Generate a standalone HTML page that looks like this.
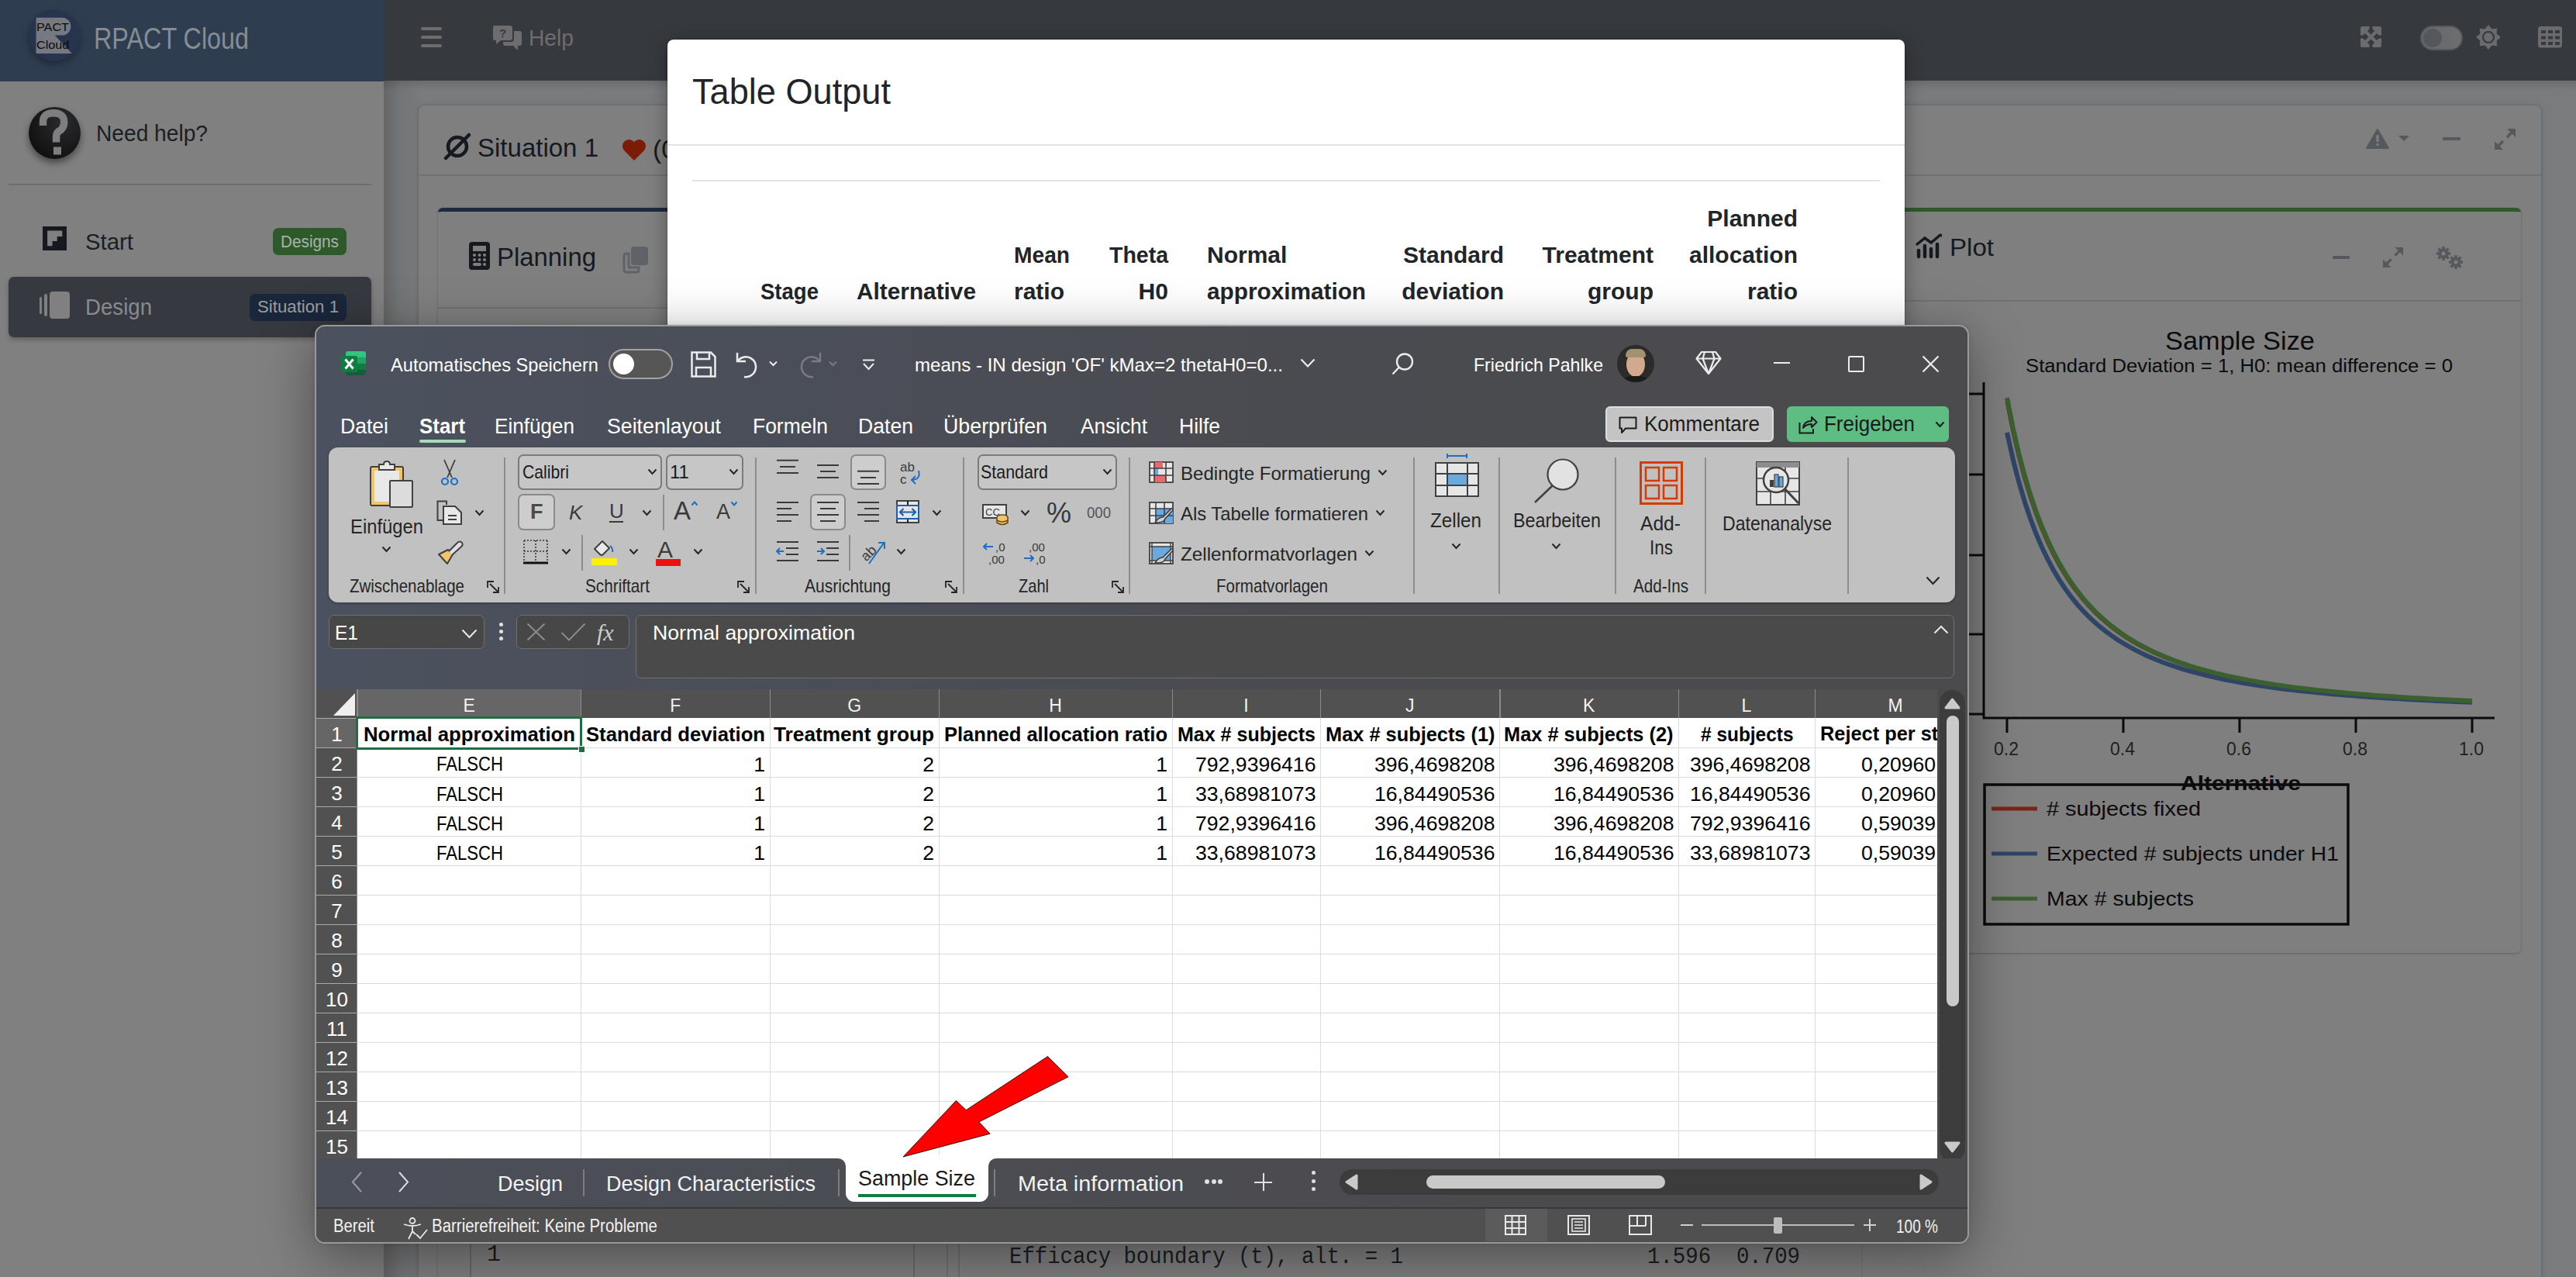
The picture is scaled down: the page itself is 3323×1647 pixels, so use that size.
<!DOCTYPE html>
<html><head><meta charset="utf-8">
<style>
*{box-sizing:border-box}
html,body{margin:0;padding:0}
body{width:3323px;height:1647px;overflow:hidden;position:relative;background:#7d7d7d;font-family:"Liberation Sans",sans-serif;color:#1a1d21}
.a{position:absolute}
.t{position:absolute;white-space:nowrap;line-height:1;top:calc(var(--b) * 1px - 0.8465em);transform-origin:0 0}
.b{font-weight:bold}
svg{position:absolute;overflow:visible}
</style></head>
<body>
<!-- ============ BACKGROUND APP (dimmed) ============ -->
<div class="a" style="left:0;top:0;width:495px;height:105px;background:#2f3d51"></div>
<div class="a" style="left:495px;top:0;width:2828px;height:104px;background:#36393e"></div>
<div class="a" style="left:0;top:105px;width:495px;height:1542px;background:#808080"></div>
<div class="a" style="left:495px;top:104px;width:2828px;height:1543px;background:#7a7b7c"></div>
<div class="a" style="left:495px;top:104px;width:50px;height:1543px;background:linear-gradient(90deg,#656566 0,#737475 40%,#7a7b7c 100%)"></div>
<div class="a" style="left:495px;top:104px;width:2828px;height:12px;background:linear-gradient(180deg,rgba(0,0,0,.12),rgba(0,0,0,0))"></div>

<!-- logo -->
<div class="a" style="left:37px;top:13px;width:66px;height:66px;border-radius:50%;background:#26344d;box-shadow:0 4px 10px rgba(0,0,0,.35)"></div>
<svg style="left:0;top:0" width="120" height="100"><path d="M46.6 22.7 H80 A11.4 11.4 0 0 1 80 45.5 H70.6 L92.8 69 H46.6 Z" fill="#76797f"></path></svg>
<span class="t" style="left: 46.6px; --b: 40; font-size: 15px; color: rgb(11, 11, 11); --w: 42; transform: scaleX(1.0795); top: 27.3px;">PACT</span>
<span class="t" style="left: 46.6px; --b: 63; font-size: 15px; color: rgb(11, 11, 11); --w: 42.4; transform: scaleX(1.0815); top: 50.3px;">Cloud</span>
<span class="t" style="left: 121px; --b: 63; font-size: 38px; color: rgb(134, 140, 147); --w: 200; transform: scaleX(0.8506); top: 30.8px;">RPACT Cloud</span>

<!-- top nav -->
<div class="a" style="left:543px;top:35px;width:27px;height:4px;background:#6d6d70;border-radius:2px"></div>
<div class="a" style="left:543px;top:46px;width:27px;height:4px;background:#6d6d70;border-radius:2px"></div>
<div class="a" style="left:543px;top:57px;width:27px;height:4px;background:#6d6d70;border-radius:2px"></div>
<svg style="left:634px;top:32px" width="40" height="34" viewBox="0 0 40 34"><path d="M2 3 Q2 1 4 1 H24 Q27 1 27 4 V17 Q27 20 24 20 H12 L6 25 V20 H4 Q2 20 2 17 Z" fill="#6d6d70"></path><path d="M29 8 H36 Q39 8 39 11 V24 Q39 27 36 27 H34 V33 L28 27 H18 Q15 27 15 24 V22 H25 Q29 22 29 18 Z" fill="#6d6d70"></path><text x="10" y="16" font-size="15" font-weight="bold" fill="#36393e" font-family="Liberation Sans">?</text></svg>
<span class="t" style="left: 682px; --b: 59; font-size: 29px; color: rgb(109, 109, 112); --w: 58; transform: scaleX(0.9722); top: 34.5px;">Help</span>

<svg style="left:3045px;top:34px" width="27" height="27" viewBox="0 0 27 27"><rect width="27" height="27" rx="2.5" fill="#6a6b6e"></rect><g fill="#36393e"><path d="M8.9 5.9 L13.5 1.3000000000000007 L18.1 5.9 L13.5 10.5 ZM8.9 21.1 L13.5 16.5 L18.1 21.1 L13.5 25.700000000000003 ZM1.3000000000000007 13.5 L5.9 8.9 L10.5 13.5 L5.9 18.1 ZM16.5 13.5 L21.1 8.9 L25.700000000000003 13.5 L21.1 18.1 Z"></path><rect x="11.5" y="-1" width="4" height="4"></rect><rect x="11.5" y="24" width="4" height="4"></rect><rect x="-1" y="11.5" width="4" height="4"></rect><rect x="24" y="11.5" width="4" height="4"></rect></g></svg>
<div class="a" style="left:3122px;top:33px;width:55px;height:32px;border-radius:16px;background:linear-gradient(90deg,#66676a,#6e6e70);border:2px solid #55585c"></div>
<div class="a" style="left:3126px;top:37px;width:24px;height:24px;border-radius:50%;background:#54575b"></div>
<svg style="left:3194px;top:32px" width="32" height="32" viewBox="0 0 32 32"><path d="M16.00 0.00 L20.40 5.38 L27.31 4.69 L26.62 11.60 L32.00 16.00 L26.62 20.40 L27.31 27.31 L20.40 26.62 L16.00 32.00 L11.60 26.62 L4.69 27.31 L5.38 20.40 L0.00 16.00 L5.38 11.60 L4.69 4.69 L11.60 5.38 Z" fill="#6a6b6e"></path><circle cx="16" cy="16" r="7" fill="none" stroke="#36393e" stroke-width="2.2"></circle></svg>
<svg style="left:3274px;top:34px" width="32" height="28" viewBox="0 0 32 28"><rect width="31" height="27.5" rx="3.5" fill="#6a6b6e"></rect><rect x="4" y="5.0" width="6" height="4" fill="#36393e"></rect><rect x="4" y="12.5" width="6" height="4" fill="#36393e"></rect><rect x="4" y="20.0" width="6" height="4" fill="#36393e"></rect><rect x="13" y="5.0" width="6" height="4" fill="#36393e"></rect><rect x="13" y="12.5" width="6" height="4" fill="#36393e"></rect><rect x="13" y="20.0" width="6" height="4" fill="#36393e"></rect><rect x="22" y="5.0" width="6" height="4" fill="#36393e"></rect><rect x="22" y="12.5" width="6" height="4" fill="#36393e"></rect><rect x="22" y="20.0" width="6" height="4" fill="#36393e"></rect></svg>

<!-- sidebar -->
<div class="a" style="left:37px;top:138px;width:67px;height:67px;border-radius:50%;background:radial-gradient(circle at 65% 30%,#2a2b2d,#111 75%);box-shadow:0 5px 10px rgba(0,0,0,.45)"></div>
<svg style="left:36px;top:137px" width="68" height="68" viewBox="0 0 68 68"><path d="M19.5 25 V20 Q19.5 8.7 33 8.7 Q46.7 8.7 46.7 21 Q46.7 29 39 33 Q36.6 35 36.6 40 V46.4" fill="none" stroke="#7e7e7e" stroke-width="9.5"></path><rect x="33" y="52.5" width="10" height="10" fill="#7e7e7e"></rect></svg>
<span class="t" style="left: 124px; --b: 182; font-size: 30px; color: rgb(27, 30, 34); --w: 144; transform: scaleX(0.9383); top: 156.6px;">Need help?</span>
<div class="a" style="left:11px;top:237px;width:468px;height:2px;background:#6d6d6d"></div>

<div class="a" style="left:55px;top:292px;width:31px;height:31px;background:#16191d"></div>
<svg style="left:0;top:0" width="100" height="340"><path d="M61.1 297.6 H80.3 V305 H73.7 V311.1 H67.6 V317.2 H61.1 Z" fill="#808080"></path></svg>
<span class="t" style="left: 110px; --b: 322; font-size: 30px; color: rgb(27, 30, 34); --w: 62; transform: scaleX(0.9785); top: 296.6px;">Start</span>
<div class="a" style="left:352px;top:294px;width:95px;height:35px;border-radius:7px;background:#2e5a2b"></div>
<span class="t" style="left: 362px; --b: 320; font-size: 22px; color: rgb(169, 178, 168); --w: 75; transform: scaleX(0.9436); top: 301.4px;">Designs</span>

<div class="a" style="left:11px;top:357px;width:468px;height:78px;border-radius:7px;background:#36393f;box-shadow:0 3px 6px rgba(0,0,0,.25)"></div>
<div class="a" style="left:50.6px;top:383px;width:3px;height:22px;background:#808080;border-radius:1.5px"></div>
<div class="a" style="left:57px;top:379px;width:4px;height:29px;background:#808080;border-radius:2px"></div>
<div class="a" style="left:64px;top:376px;width:26px;height:35px;background:#808080;border-radius:4px"></div>
<span class="t" style="left: 110px; --b: 406; font-size: 30px; color: rgb(135, 138, 142); --w: 86; transform: scaleX(0.9209); top: 380.6px;">Design</span>
<div class="a" style="left:322px;top:379px;width:125px;height:35px;border-radius:7px;background:#1a263a"></div>
<span class="t" style="left: 332px; --b: 404; font-size: 22px; color: rgb(154, 158, 164); --w: 105; transform: scaleX(1.0099); top: 385.4px;">Situation 1</span>

<!-- situation card -->
<div class="a" style="left:540px;top:136px;width:2738px;height:1520px;border-radius:7px;background:#7f7f7f;box-shadow:0 0 2px rgba(0,0,0,.2),0 1px 9px rgba(0,0,0,.16)"></div>
<div class="a" style="left:540px;top:225px;width:2738px;height:2px;background:#717171"></div>
<svg style="left:572px;top:171px" width="36" height="36" viewBox="0 0 36 36"><circle cx="18" cy="18" r="12" fill="none" stroke="#16191d" stroke-width="4.5"></circle><path d="M33 3 L3 33" stroke="#16191d" stroke-width="4.5" stroke-linecap="round"></path></svg>
<span class="t" style="left: 616px; --b: 202; font-size: 34px; color: rgb(22, 25, 29); --w: 156; transform: scaleX(0.9709); top: 173.2px;">Situation 1</span>
<svg style="left:802px;top:180px" width="32" height="27" viewBox="0 0 32 27"><path d="M16 27 L3 14 A8 8 0 0 1 16 3 A8 8 0 0 1 29 14 Z" fill="#7a1c06"></path></svg>
<span class="t" style="left: 842px; --b: 204; font-size: 34px; color: rgb(22, 25, 29); top: 175.2px;">(0</span>

<!-- warning, minus, expand icons on situation card -->
<svg style="left:3052px;top:166px" width="30" height="26" viewBox="0 0 30 26"><path d="M15 1 L29 25 H1 Z" fill="#55595e" stroke="#55595e" stroke-width="2" stroke-linejoin="round"></path><rect x="13.5" y="8" width="3" height="9" fill="#7f7f7f"></rect><rect x="13.5" y="19" width="3" height="3" fill="#7f7f7f"></rect></svg>
<svg style="left:3093px;top:174px" width="16" height="10" viewBox="0 0 16 10"><path d="M1 1 H15 L8 8 Z" fill="#55595e"></path></svg>
<div class="a" style="left:3151px;top:177px;width:23px;height:4px;background:#55595e;border-radius:1px"></div>
<svg style="left:3217px;top:165px" width="29" height="29" viewBox="0 0 29 29"><path d="M17 12 L26 3 M12 17 L3 26" stroke="#55595e" stroke-width="3.5"></path><path d="M17 1 H28 V12 Z M1 17 V28 H12 Z" fill="#55595e"></path></svg>

<!-- planning card -->
<div class="a" style="left:565px;top:268px;width:1836px;height:1400px;border-radius:6px;background:#7f7f7f;border-top:5px solid #1c2a40;box-shadow:0 1px 3px rgba(0,0,0,.25)"></div>
<div class="a" style="left:565px;top:396px;width:1836px;height:2px;background:#717171"></div>
<svg style="left:605px;top:312px" width="27" height="36" viewBox="0 0 27 36"><rect x="0" y="0" width="27" height="36" rx="4" fill="#16191d"></rect><rect x="5" y="5" width="17" height="7" fill="#7f7f7f"></rect><g fill="#7f7f7f"><circle cx="7" cy="17" r="2"></circle><circle cx="13.5" cy="17" r="2"></circle><circle cx="20" cy="17" r="2"></circle><circle cx="7" cy="23" r="2"></circle><circle cx="13.5" cy="23" r="2"></circle><circle cx="20" cy="23" r="2"></circle><rect x="5" y="27" width="11" height="4" rx="2"></rect><circle cx="20" cy="29" r="2"></circle></g></svg>
<span class="t" style="left: 641px; --b: 343; font-size: 34px; color: rgb(22, 25, 29); --w: 128; transform: scaleX(0.9672); top: 314.2px;">Planning</span>
<svg style="left:802px;top:318px" width="34" height="34" viewBox="0 0 34 34"><path d="M3 12 Q3 9 6 9 H9 V26 Q9 27 10 27 H22 V30 Q22 33 19 33 H6 Q3 33 3 30 Z" fill="none" stroke="#5f6368" stroke-width="3"></path><rect x="12" y="0" width="22" height="24" rx="4" fill="#5f6368"></rect></svg>

<!-- plot card -->
<div class="a" style="left:2300px;top:268px;width:952px;height:961px;border-radius:6px;background:#7f7f7f;border-top:5px solid #2d5a28;box-shadow:0 1px 3px rgba(0,0,0,.25)"></div>
<div class="a" style="left:2300px;top:387px;width:952px;height:2px;background:#717171"></div>
<svg style="left:2471px;top:301px" width="35" height="32" viewBox="0 0 35 32"><path d="M2 14 L12 6 L20 12 L32 2" fill="none" stroke="#16191d" stroke-width="3.5" stroke-linecap="round"></path><path d="M30 1 H34 V5 Z" fill="#16191d"></path><g stroke="#16191d" stroke-width="4.5" stroke-linecap="round"><path d="M4 22 V30 M12 16 V30 M20 20 V30 M28 14 V30"></path></g></svg>
<span class="t" style="left: 2515px; --b: 330; font-size: 32px; color: rgb(22, 25, 29); --w: 57; transform: scaleX(1.0337); top: 302.9px;">Plot</span>
<div class="a" style="left:3009px;top:330px;width:22px;height:4px;background:#55595e;border-radius:1px"></div>
<svg style="left:3073px;top:318px" width="28" height="28" viewBox="0 0 29 29"><path d="M17 12 L26 3 M12 17 L3 26" stroke="#55595e" stroke-width="3.5"></path><path d="M17 1 H28 V12 Z M1 17 V28 H12 Z" fill="#55595e"></path></svg>
<svg style="left:3143px;top:318px" width="36" height="30" viewBox="0 0 36 30"><g fill="#55595e"><circle cx="9" cy="9" r="6.5"></circle><circle cx="25" cy="20" r="6.5"></circle><g stroke="#55595e" stroke-width="3.5"><path d="M9 0 V18 M0 9 H18 M2.6 2.6 L15.4 15.4 M15.4 2.6 L2.6 15.4"></path><path d="M25 11 V29 M16 20 H34 M18.6 13.6 L31.4 26.4 M31.4 13.6 L18.6 26.4"></path></g></g><circle cx="9" cy="9" r="2.5" fill="#7f7f7f"></circle><circle cx="25" cy="20" r="2.5" fill="#7f7f7f"></circle></svg>

<!-- plot -->
<span class="t" style="--c: 2889px; left: 2792.5px; --b: 451; font-size: 33px; color: rgb(11, 11, 11); --w: 193; transform: scaleX(1.0417); top: 423.1px;">Sample Size</span>
<span class="t" style="left: 2613px; --b: 480; font-size: 23px; color: rgb(11, 11, 11); --w: 551; transform: scaleX(1.1174); top: 460.5px;">Standard Deviation = 1, H0: mean difference = 0</span>
<svg style="left:0;top:0" width="3323" height="1647">
 <g stroke="#0b0b0b" stroke-width="3" fill="none">
  <path d="M2559 493 V926 H3218"></path>
  <path d="M2540 508 H2559 M2540 612 H2559 M2540 716 H2559 M2540 818 H2559 M2540 921 H2559"></path>
  <path d="M2589 926 V945 M2739 926 V945 M2889 926 V945 M3039 926 V945 M3189 926 V945"></path>
 </g>
 <rect x="2560" y="1012" width="469" height="180" fill="none" stroke="#0b0b0b" stroke-width="3.5"></rect>
 <path d="M2569 1043 H2628" stroke="#7c2418" stroke-width="5"></path>
 <path d="M2569 1101 H2628" stroke="#2d4567" stroke-width="5"></path>
 <path d="M2569 1159 H2628" stroke="#3a6030" stroke-width="5"></path>
 <path id="cb" d="M2589.0 557.8 L2596.5 591.5 L2604.0 620.7 L2611.5 646.2 L2619.0 668.6 L2626.5 688.3 L2634.0 705.8 L2641.5 721.4 L2649.0 735.4 L2656.5 747.9 L2664.0 759.2 L2671.5 769.4 L2679.0 778.7 L2686.5 787.2 L2694.0 794.9 L2701.5 801.9 L2709.0 808.4 L2716.5 814.4 L2724.0 819.9 L2731.5 825.0 L2739.0 829.7 L2746.5 834.0 L2754.0 838.1 L2761.5 841.9 L2769.0 845.4 L2776.5 848.7 L2784.0 851.8 L2791.5 854.7 L2799.0 857.4 L2806.5 859.9 L2814.0 862.3 L2821.5 864.6 L2829.0 866.7 L2836.5 868.7 L2844.0 870.6 L2851.5 872.4 L2859.0 874.1 L2866.5 875.7 L2874.0 877.2 L2881.5 878.6 L2889.0 880.0 L2896.5 881.3 L2904.0 882.6 L2911.5 883.8 L2919.0 884.9 L2926.5 886.0 L2934.0 887.0 L2941.5 888.0 L2949.0 888.9 L2956.5 889.8 L2964.0 890.7 L2971.5 891.5 L2979.0 892.3 L2986.5 893.1 L2994.0 893.8 L3001.5 894.5 L3009.0 895.2 L3016.5 895.8 L3024.0 896.5 L3031.5 897.1 L3039.0 897.6 L3046.5 898.2 L3054.0 898.7 L3061.5 899.3 L3069.0 899.8 L3076.5 900.2 L3084.0 900.7 L3091.5 901.1 L3099.0 901.6 L3106.5 902.0 L3114.0 902.4 L3121.5 902.8 L3129.0 903.2 L3136.5 903.5 L3144.0 903.9 L3151.5 904.2 L3159.0 904.6 L3166.5 904.9 L3174.0 905.2 L3181.5 905.5 L3189.0 905.8" fill="none" stroke="#2d4567" stroke-width="6"></path>
 <path id="cr" d="M2589.0 517.8 L2596.5 555.2 L2604.0 587.7 L2611.5 616.0 L2619.0 640.8 L2626.5 662.7 L2634.0 682.1 L2641.5 699.4 L2649.0 714.9 L2656.5 728.9 L2664.0 741.4 L2671.5 752.8 L2679.0 763.1 L2686.5 772.5 L2694.0 781.0 L2701.5 788.9 L2709.0 796.1 L2716.5 802.7 L2724.0 808.8 L2731.5 814.4 L2739.0 819.7 L2746.5 824.5 L2754.0 829.0 L2761.5 833.2 L2769.0 837.1 L2776.5 840.8 L2784.0 844.2 L2791.5 847.4 L2799.0 850.4 L2806.5 853.2 L2814.0 855.9 L2821.5 858.4 L2829.0 860.8 L2836.5 863.0 L2844.0 865.1 L2851.5 867.1 L2859.0 869.0 L2866.5 870.7 L2874.0 872.4 L2881.5 874.0 L2889.0 875.6 L2896.5 877.0 L2904.0 878.4 L2911.5 879.7 L2919.0 881.0 L2926.5 882.2 L2934.0 883.3 L2941.5 884.4 L2949.0 885.5 L2956.5 886.5 L2964.0 887.4 L2971.5 888.4 L2979.0 889.2 L2986.5 890.1 L2994.0 890.9 L3001.5 891.7 L3009.0 892.4 L3016.5 893.1 L3024.0 893.8 L3031.5 894.5 L3039.0 895.1 L3046.5 895.8 L3054.0 896.4 L3061.5 896.9 L3069.0 897.5 L3076.5 898.0 L3084.0 898.5 L3091.5 899.0 L3099.0 899.5 L3106.5 900.0 L3114.0 900.4 L3121.5 900.9 L3129.0 901.3 L3136.5 901.7 L3144.0 902.1 L3151.5 902.5 L3159.0 902.8 L3166.5 903.2 L3174.0 903.5 L3181.5 903.9 L3189.0 904.2" fill="none" stroke="#7c2418" stroke-width="5"></path>
 <path id="cg" d="M2589.0 513.1 L2596.5 550.9 L2604.0 583.7 L2611.5 612.4 L2619.0 637.5 L2626.5 659.7 L2634.0 679.3 L2641.5 696.8 L2649.0 712.5 L2656.5 726.6 L2664.0 739.3 L2671.5 750.8 L2679.0 761.2 L2686.5 770.7 L2694.0 779.4 L2701.5 787.3 L2709.0 794.6 L2716.5 801.3 L2724.0 807.5 L2731.5 813.2 L2739.0 818.5 L2746.5 823.4 L2754.0 828.0 L2761.5 832.2 L2769.0 836.2 L2776.5 839.9 L2784.0 843.3 L2791.5 846.6 L2799.0 849.6 L2806.5 852.5 L2814.0 855.1 L2821.5 857.7 L2829.0 860.1 L2836.5 862.3 L2844.0 864.4 L2851.5 866.4 L2859.0 868.4 L2866.5 870.2 L2874.0 871.9 L2881.5 873.5 L2889.0 875.0 L2896.5 876.5 L2904.0 877.9 L2911.5 879.3 L2919.0 880.5 L2926.5 881.7 L2934.0 882.9 L2941.5 884.0 L2949.0 885.1 L2956.5 886.1 L2964.0 887.1 L2971.5 888.0 L2979.0 888.9 L2986.5 889.7 L2994.0 890.6 L3001.5 891.3 L3009.0 892.1 L3016.5 892.8 L3024.0 893.5 L3031.5 894.2 L3039.0 894.8 L3046.5 895.5 L3054.0 896.1 L3061.5 896.7 L3069.0 897.2 L3076.5 897.8 L3084.0 898.3 L3091.5 898.8 L3099.0 899.3 L3106.5 899.7 L3114.0 900.2 L3121.5 900.6 L3129.0 901.1 L3136.5 901.5 L3144.0 901.9 L3151.5 902.3 L3159.0 902.6 L3166.5 903.0 L3174.0 903.3 L3181.5 903.7 L3189.0 904.0" fill="none" stroke="#3a6030" stroke-width="6"></path>
</svg>
<span class="t" style="left: 2572px; --b: 974; font-size: 23px; color: rgb(31, 31, 31); top: 954.5px;">0.2</span>
<span class="t" style="left: 2722px; --b: 974; font-size: 23px; color: rgb(31, 31, 31); top: 954.5px;">0.4</span>
<span class="t" style="left: 2872px; --b: 974; font-size: 23px; color: rgb(31, 31, 31); top: 954.5px;">0.6</span>
<span class="t" style="left: 3022px; --b: 974; font-size: 23px; color: rgb(31, 31, 31); top: 954.5px;">0.8</span>
<span class="t" style="left: 3172px; --b: 974; font-size: 23px; color: rgb(31, 31, 31); top: 954.5px;">1.0</span>
<span class="t b" style="left: 2813px; --b: 1019; font-size: 26px; color: rgb(11, 11, 11); --w: 155; transform: scaleX(1.1534); top: 997px;">Alternative</span>
<span class="t" style="left: 2640px; --b: 1052; font-size: 25px; color: rgb(11, 11, 11); --w: 199; transform: scaleX(1.1548); top: 1030.8px;">#&nbsp;subjects fixed</span>
<span class="t" style="left: 2640px; --b: 1110; font-size: 25px; color: rgb(11, 11, 11); --w: 377; transform: scaleX(1.1303); top: 1088.8px;">Expected # subjects under H1</span>
<span class="t" style="left: 2640px; --b: 1168; font-size: 25px; color: rgb(11, 11, 11); --w: 190; transform: scaleX(1.1394); top: 1146.8px;">Max # subjects</span>

<!-- bottom strip (below excel) -->
<div class="a" style="left:606px;top:1590px;width:574px;height:80px;border:2px solid #6a6a6a;border-radius:6px"></div>
<span class="t" style="left: 628px; --b: 1628; font-size: 30px; font-family: &quot;Liberation Mono&quot;, monospace; color: rgb(26, 29, 33); top: 1602.6px;">1</span>
<div class="a" style="left:1221px;top:1590px;width:2px;height:60px;background:#6f6f6f"></div>
<div class="a" style="left:1236px;top:1590px;width:2px;height:60px;background:#6f6f6f"></div>
<span class="t" style="left: 1302px; --b: 1631; font-size: 30px; font-family: &quot;Liberation Mono&quot;, monospace; color: rgb(26, 29, 33); --w: 508; transform: scaleX(0.9102); top: 1605.6px;">Efficacy boundary (t), alt. = 1</span>
<span class="t" style="left: 2125px; --b: 1631; font-size: 30px; font-family: &quot;Liberation Mono&quot;, monospace; color: rgb(26, 29, 33); --w: 197; transform: scaleX(0.9118); top: 1605.6px;">1.596&nbsp; 0.709</span>

<!-- ============ MODAL ============ -->
<div class="a" style="left:861px;top:51px;width:1596px;height:1400px;background:#fff;border-radius:8px;box-shadow:0 0 0 1px rgba(0,0,0,.18),0 5px 25px rgba(0,0,0,.35)"></div>
<span class="t" style="left: 893px; --b: 134; font-size: 46px; color: rgb(33, 37, 41); --w: 256; transform: scaleX(0.9814); top: 95.1px;">Table Output</span>
<div class="a" style="left:861px;top:186px;width:1596px;height:2px;background:#dfe2e6"></div>
<div class="a" style="left:893px;top:232px;width:1532px;height:2px;background:#dfe2e6"></div>
<span class="t b" style="left: 981px; --b: 386; font-size: 30px; color: rgb(33, 37, 41); --w: 75; transform: scaleX(0.918); top: 360.6px;">Stage</span>
<span class="t b" style="left: 1105px; --b: 386; font-size: 30px; color: rgb(33, 37, 41); --w: 154; transform: scaleX(0.9931); top: 360.6px;">Alternative</span>
<span class="t b" style="left: 1308px; --b: 339; font-size: 30px; color: rgb(33, 37, 41); --w: 72; transform: scaleX(0.9389); top: 313.6px;">Mean</span>
<span class="t b" style="left: 1308px; --b: 386; font-size: 30px; color: rgb(33, 37, 41); top: 360.6px;">ratio</span>
<span class="t b" style="left: 1431px; --b: 339; font-size: 30px; color: rgb(33, 37, 41); --w: 76; transform: scaleX(0.9498); top: 313.6px;">Theta</span>
<span class="t b" style="--r: 1507; left: 1468.6px; --b: 386; font-size: 30px; color: rgb(33, 37, 41); top: 360.6px;">H0</span>
<span class="t b" style="left: 1557px; --b: 339; font-size: 30px; color: rgb(33, 37, 41); top: 313.6px;">Normal</span>
<span class="t b" style="left: 1557px; --b: 386; font-size: 30px; color: rgb(33, 37, 41); --w: 205; transform: scaleX(0.9918); top: 360.6px;">approximation</span>
<span class="t b" style="--r: 1940; left: 1810px; --b: 339; font-size: 30px; color: rgb(33, 37, 41); top: 313.6px;">Standard</span>
<span class="t b" style="--r: 1940; left: 1808.3px; --b: 386; font-size: 30px; color: rgb(33, 37, 41); top: 360.6px;">deviation</span>
<span class="t b" style="--r: 2133; left: 1989.6px; --b: 339; font-size: 30px; color: rgb(33, 37, 41); top: 313.6px;">Treatment</span>
<span class="t b" style="--r: 2133; left: 2048px; --b: 386; font-size: 30px; color: rgb(33, 37, 41); top: 360.6px;">group</span>
<span class="t b" style="--r: 2319; left: 2202.3px; --b: 292; font-size: 30px; color: rgb(33, 37, 41); top: 266.6px;">Planned</span>
<span class="t b" style="--r: 2319; left: 2179px; --b: 339; font-size: 30px; color: rgb(33, 37, 41); top: 313.6px;">allocation</span>
<span class="t b" style="--r: 2319; left: 2254px; --b: 386; font-size: 30px; color: rgb(33, 37, 41); top: 360.6px;">ratio</span>

<!-- EXCEL -->
<!--EXCEL_START-->
<div class="a" style="left:406px;top:419px;width:2134px;height:1185px;border-radius:13px;border:2px solid #999;background:linear-gradient(90deg,#4b515e 0,#4a4e58 30%,#4a4b50 60%,#4b4b4d 100%);box-shadow:0 16px 70px rgba(0,0,0,.40),0 0 6px rgba(0,0,0,.10)"></div>
<!-- title bar -->
<svg style="left:440px;top:453px" width="33" height="32" viewBox="0 0 33 32"><rect x="6" y="0" width="26" height="31" rx="3" fill="#21a366"></rect><path d="M9 0 H29 Q32 0 32 3 V8 H6 V3 Q6 0 9 0Z" fill="#33c481"></path><rect x="6" y="16" width="26" height="8" fill="#107c41"></rect><path d="M6 24 H32 V28 Q32 31 29 31 H9 Q6 31 6 28Z" fill="#185c37"></path><rect x="0" y="6" width="21" height="21" rx="2" fill="#107c41"></rect><path d="M5.5 10.5 L15.5 22.5 M15.5 10.5 L5.5 22.5" stroke="#fff" stroke-width="3"></path></svg>
<span class="t" style="left: 504px; --b: 479; font-size: 24px; color: rgb(255, 255, 255); --w: 268; transform: scaleX(0.9847); top: 458.7px;">Automatisches Speichern</span>
<div class="a" style="left:785px;top:450px;width:83px;height:39px;border-radius:20px;border:2px solid #a2a2a2;background:#565656"></div>
<div class="a" style="left:791px;top:456px;width:27px;height:27px;border-radius:50%;background:#fff"></div>
<svg style="left:891px;top:453px" width="33" height="34" viewBox="0 0 33 34"><path d="M1.5 1.5 H26 L31.5 7 V32.5 H1.5 Z" fill="none" stroke="#ececec" stroke-width="2.5"></path><path d="M8 1.5 V10 H24 V1.5" fill="none" stroke="#ececec" stroke-width="2.5"></path><path d="M7 32.5 V21 H26 V32.5" fill="none" stroke="#ececec" stroke-width="2.5"></path></svg>
<svg style="left:948px;top:452px" width="34" height="36" viewBox="0 0 34 36"><path d="M3 3 V14 H14" fill="none" stroke="#ececec" stroke-width="2.5"></path><path d="M4 13 A13 13 0 1 1 12 34" fill="none" stroke="#ececec" stroke-width="2.5"></path></svg>
<svg style="left:992px;top:465px" width="11" height="8" viewBox="0 0 11 8"><path d="M1 1.5 L5.5 6 L10 1.5" fill="none" stroke="#ececec" stroke-width="2"></path></svg>
<svg style="left:1027px;top:452px" width="34" height="36" viewBox="0 0 34 36"><path d="M31 3 V14 H20" fill="none" stroke="#7b7b7e" stroke-width="2.5"></path><path d="M30 13 A13 13 0 1 0 22 34" fill="none" stroke="#7b7b7e" stroke-width="2.5"></path></svg>
<svg style="left:1069px;top:465px" width="11" height="8" viewBox="0 0 11 8"><path d="M1 1.5 L5.5 6 L10 1.5" fill="none" stroke="#7b7b7e" stroke-width="2"></path></svg>
<svg style="left:1112px;top:463px" width="17" height="16" viewBox="0 0 17 16"><path d="M1 1.5 H16" stroke="#ececec" stroke-width="2"></path><path d="M2 6 L8.5 13 L15 6" fill="none" stroke="#ececec" stroke-width="2"></path></svg>
<span class="t" style="left: 1180px; --b: 479; font-size: 24px; color: rgb(255, 255, 255); --w: 475; transform: scaleX(1.0034); top: 458.7px;">means - IN design 'OF' kMax=2 thetaH0=0...</span>
<svg style="left:1677px;top:462px" width="20" height="13" viewBox="0 0 20 13"><path d="M1.5 1.5 L10 10.5 L18.5 1.5" fill="none" stroke="#ececec" stroke-width="2.2"></path></svg>
<svg style="left:1795px;top:455px" width="29" height="29" viewBox="0 0 29 29"><circle cx="17" cy="11.5" r="10" fill="none" stroke="#ececec" stroke-width="2.3"></circle><path d="M10 18.5 L1.5 27.5" stroke="#ececec" stroke-width="2.3"></path></svg>
<span class="t" style="left: 1901px; --b: 479; font-size: 24px; color: rgb(255, 255, 255); --w: 167; transform: scaleX(0.9631); top: 458.7px;">Friedrich Pahlke</span>
<div class="a" style="left:2086px;top:445px;width:48px;height:48px;border-radius:50%;background:#2b2b2b;overflow:hidden"><div class="a" style="left:12px;top:9px;width:24px;height:32px;border-radius:50%;background:#d2a98e"></div><div class="a" style="left:11px;top:5px;width:26px;height:11px;border-radius:12px 12px 4px 4px;background:#a4916e"></div><div class="a" style="left:6px;top:40px;width:36px;height:14px;border-radius:50%;background:#1a1a1a"></div></div>
<svg style="left:2187px;top:452px" width="34" height="32" viewBox="0 0 34 32"><path d="M8 2 H26 L32.5 10.5 L17 30 L1.5 10.5 Z M1.5 10.5 H32.5 M12 2 L9.5 10.5 L17 30 L24.5 10.5 L22 2" fill="none" stroke="#ececec" stroke-width="2.2" stroke-linejoin="round"></path></svg>
<div class="a" style="left:2288px;top:467px;width:21px;height:2px;background:#ececec"></div>
<div class="a" style="left:2384px;top:459px;width:21px;height:21px;border:2px solid #ececec;border-radius:2px"></div>
<svg style="left:2479px;top:458px" width="23" height="23" viewBox="0 0 23 23"><path d="M1.5 1.5 L21.5 21.5 M21.5 1.5 L1.5 21.5" stroke="#ececec" stroke-width="2.2"></path></svg>
<!-- menu -->
<span class="t" style="left: 439px; --b: 560; font-size: 27px; color: rgb(255, 255, 255); --w: 62; transform: scaleX(0.9836); top: 537.1px;">Datei</span>
<span class="t b" style="left: 541px; --b: 560; font-size: 27px; color: rgb(255, 255, 255); --w: 59; transform: scaleX(0.9591); top: 537.1px;">Start</span>
<div class="a" style="left:541px;top:567px;width:60px;height:4px;border-radius:2px;background:#a5dbb5"></div>
<span class="t" style="left: 638px; --b: 560; font-size: 27px; color: rgb(255, 255, 255); --w: 103; transform: scaleX(0.9663); top: 537.1px;">Einfügen</span>
<span class="t" style="left: 783px; --b: 560; font-size: 27px; color: rgb(255, 255, 255); --w: 147; transform: scaleX(0.9892); top: 537.1px;">Seitenlayout</span>
<span class="t" style="left: 971px; --b: 560; font-size: 27px; color: rgb(255, 255, 255); --w: 97; transform: scaleX(0.9795); top: 537.1px;">Formeln</span>
<span class="t" style="left: 1107px; --b: 560; font-size: 27px; color: rgb(255, 255, 255); --w: 71; transform: scaleX(0.9853); top: 537.1px;">Daten</span>
<span class="t" style="left: 1217px; --b: 560; font-size: 27px; color: rgb(255, 255, 255); --w: 134; transform: scaleX(0.9919); top: 537.1px;">Überprüfen</span>
<span class="t" style="left: 1394px; --b: 560; font-size: 27px; color: rgb(255, 255, 255); --w: 86; transform: scaleX(0.9712); top: 537.1px;">Ansicht</span>
<span class="t" style="left: 1521px; --b: 560; font-size: 27px; color: rgb(255, 255, 255); --w: 53; transform: scaleX(0.9812); top: 537.1px;">Hilfe</span>
<div class="a" style="left:2071px;top:524px;width:217px;height:46px;border-radius:6px;background:#c4c4c4;border:2px solid #dedede"></div>
<svg style="left:2088px;top:537px" width="24" height="23" viewBox="0 0 24 23"><path d="M1.5 1.5 H22.5 V15.5 H9 L4 21 V15.5 H1.5 Z" fill="none" stroke="#1d1d1d" stroke-width="2" stroke-linejoin="round"></path></svg>
<span class="t" style="left: 2121px; --b: 557; font-size: 27px; color: rgb(27, 27, 27); --w: 149; transform: scaleX(0.9639); top: 534.1px;">Kommentare</span>
<div class="a" style="left:2305px;top:524px;width:209px;height:46px;border-radius:6px;background:#5ebd82"></div>
<svg style="left:2320px;top:535px" width="25" height="25" viewBox="0 0 25 25"><path d="M1.5 10 V23.5 H19 V18" fill="none" stroke="#1b1b1b" stroke-width="2"></path><path d="M6 17 Q7 8 17 8 V3 L23.5 9.5 L17 16 V12 Q10 12 6 17Z" fill="none" stroke="#1b1b1b" stroke-width="2" stroke-linejoin="round"></path></svg>
<span class="t" style="left: 2353px; --b: 557; font-size: 27px; color: rgb(27, 27, 27); --w: 117; transform: scaleX(0.9622); top: 534.1px;">Freigeben</span>
<svg style="left:2496px;top:543px" width="13" height="9" viewBox="0 0 13 9"><path d="M1.5 1.5 L6.5 7 L11.5 1.5" fill="none" stroke="#1b1b1b" stroke-width="2"></path></svg>
<div class="a" style="left:424px;top:577px;width:2098px;height:200px;border-radius:12px;background:#c1c1c1;box-shadow:0 1px 3px rgba(0,0,0,.35)"></div>
<!-- separators -->
<div class="a" style="left:650px;top:590px;width:2px;height:176px;background:#8d8d8d"></div>
<div class="a" style="left:974px;top:590px;width:2px;height:176px;background:#8d8d8d"></div>
<div class="a" style="left:1242px;top:590px;width:2px;height:176px;background:#8d8d8d"></div>
<div class="a" style="left:1456px;top:590px;width:2px;height:176px;background:#8d8d8d"></div>
<div class="a" style="left:1823px;top:590px;width:2px;height:176px;background:#8d8d8d"></div>
<div class="a" style="left:1933px;top:590px;width:2px;height:176px;background:#8d8d8d"></div>
<div class="a" style="left:2083px;top:590px;width:2px;height:176px;background:#8d8d8d"></div>
<div class="a" style="left:2199px;top:590px;width:2px;height:176px;background:#8d8d8d"></div>
<div class="a" style="left:2383px;top:590px;width:2px;height:176px;background:#8d8d8d"></div>
<!-- group labels -->
<span class="t" style="left: 451px; --b: 764; font-size: 24px; color: rgb(38, 38, 38); --w: 148; transform: scaleX(0.8533); top: 743.7px;">Zwischenablage</span>
<span class="t" style="left: 755px; --b: 764; font-size: 24px; color: rgb(38, 38, 38); --w: 83; transform: scaleX(0.8643); top: 743.7px;">Schriftart</span>
<span class="t" style="left: 1038px; --b: 764; font-size: 24px; color: rgb(38, 38, 38); --w: 111; transform: scaleX(0.8757); top: 743.7px;">Ausrichtung</span>
<span class="t" style="left: 1314px; --b: 764; font-size: 24px; color: rgb(38, 38, 38); --w: 39; transform: scaleX(0.8353); top: 743.7px;">Zahl</span>
<span class="t" style="left: 1569px; --b: 764; font-size: 24px; color: rgb(38, 38, 38); --w: 144; transform: scaleX(0.8567); top: 743.7px;">Formatvorlagen</span>
<span class="t" style="left: 2107px; --b: 764; font-size: 24px; color: rgb(38, 38, 38); --w: 71; transform: scaleX(0.8583); top: 743.7px;">Add-Ins</span>
<svg style="left:628px;top:749px" width="17" height="17" viewBox="0 0 17 17"><path d="M1 9 V1 H9" fill="none" stroke="#262626" stroke-width="1.8"></path><path d="M4 4 L15 15 M15 8 V15 H8" fill="none" stroke="#262626" stroke-width="1.8"></path></svg>
<svg style="left:951px;top:749px" width="17" height="17" viewBox="0 0 17 17"><path d="M1 9 V1 H9" fill="none" stroke="#262626" stroke-width="1.8"></path><path d="M4 4 L15 15 M15 8 V15 H8" fill="none" stroke="#262626" stroke-width="1.8"></path></svg>
<svg style="left:1219px;top:749px" width="17" height="17" viewBox="0 0 17 17"><path d="M1 9 V1 H9" fill="none" stroke="#262626" stroke-width="1.8"></path><path d="M4 4 L15 15 M15 8 V15 H8" fill="none" stroke="#262626" stroke-width="1.8"></path></svg>
<svg style="left:1434px;top:749px" width="17" height="17" viewBox="0 0 17 17"><path d="M1 9 V1 H9" fill="none" stroke="#262626" stroke-width="1.8"></path><path d="M4 4 L15 15 M15 8 V15 H8" fill="none" stroke="#262626" stroke-width="1.8"></path></svg>
<!-- clipboard -->
<svg style="left:476px;top:594px" width="58" height="62" viewBox="0 0 58 62"><rect x="2" y="8" width="42" height="50" rx="2" fill="#f2c46c" stroke="#404040" stroke-width="2"></rect><rect x="7" y="13" width="32" height="40" fill="#e8e8e8"></rect><path d="M13 12 V5 H19 Q19 1 23 1 Q27 1 27 5 H33 V12 Z" fill="#e8e8e8" stroke="#404040" stroke-width="2"></path><rect x="27" y="26" width="29" height="34" rx="1" fill="#dcdcdc" stroke="#404040" stroke-width="2"></rect></svg>
<span class="t" style="left: 452px; --b: 688; font-size: 25px; color: rgb(38, 38, 38); --w: 94; transform: scaleX(0.9524); top: 666.8px;">Einfügen</span>
<svg style="left:492px;top:704px" width="13" height="9" viewBox="0 0 13 9"><path d="M1.5 1.5 L6.5 7 L11.5 1.5" fill="none" stroke="#262626" stroke-width="2"></path></svg>
<svg style="left:568px;top:592px" width="24" height="35" viewBox="0 0 24 35"><path d="M5 1 L15 24 M19 1 L9 24" stroke="#404040" stroke-width="1.8"></path><circle cx="6" cy="29" r="4" fill="none" stroke="#1e6fc4" stroke-width="2.2"></circle><circle cx="18" cy="29" r="4" fill="none" stroke="#1e6fc4" stroke-width="2.2"></circle></svg>
<svg style="left:563px;top:645px" width="34" height="33" viewBox="0 0 34 33"><path d="M13 6 V1.5 H1.5 V26 H9" fill="none" stroke="#404040" stroke-width="2"></path><path d="M9 8 H24 L32 16 V31 H9 Z" fill="#e8e8e8" stroke="#404040" stroke-width="2"></path><path d="M15 20 H26 M15 25 H26" stroke="#404040" stroke-width="2"></path></svg>
<svg style="left:612px;top:657px" width="13" height="9" viewBox="0 0 13 9"><path d="M1.5 1.5 L6.5 7 L11.5 1.5" fill="none" stroke="#262626" stroke-width="2"></path></svg>
<svg style="left:564px;top:696px" width="34" height="32" viewBox="0 0 34 32"><path d="M2 19 L14 13 L20 19 L13 31 Z" fill="#f2c46c" stroke="#404040" stroke-width="2" stroke-linejoin="round"></path><path d="M15 15 L26 4 Q29 1 32 4 Q34 7 30 10 L19 20" fill="#e0e0e0" stroke="#404040" stroke-width="2"></path></svg>
<!-- font -->
<div class="a" style="left:668px;top:586px;width:186px;height:46px;border-radius:7px;border:2px solid #7b7b7b;background:#c6c6c6"></div>
<span class="t" style="left: 674px; --b: 617; font-size: 24px; color: rgb(27, 27, 27); --w: 60; transform: scaleX(0.8822); top: 596.7px;">Calibri</span>
<svg style="left:835px;top:604px" width="13" height="9" viewBox="0 0 13 9"><path d="M1.5 1.5 L6.5 7 L11.5 1.5" fill="none" stroke="#262626" stroke-width="2"></path></svg>
<div class="a" style="left:859px;top:586px;width:100px;height:46px;border-radius:7px;border:2px solid #7b7b7b;background:#c6c6c6"></div>
<span class="t" style="left: 864px; --b: 617; font-size: 24px; color: rgb(27, 27, 27); top: 596.7px;">11</span>
<svg style="left:940px;top:604px" width="13" height="9" viewBox="0 0 13 9"><path d="M1.5 1.5 L6.5 7 L11.5 1.5" fill="none" stroke="#262626" stroke-width="2"></path></svg>
<div class="a" style="left:668px;top:637px;width:48px;height:47px;border-radius:7px;border:2px solid #8a8a8a;background:#cdcdcd"></div>
<span class="t b" style="left: 684px; --b: 670; font-size: 27px; color: rgb(74, 74, 74); top: 647.1px;">F</span>
<span class="t" style="left: 734px; --b: 670; font-size: 26px; color: rgb(58, 58, 58); font-style: italic; top: 648px;">K</span>
<span class="t" style="left: 786px; --b: 668; font-size: 26px; color: rgb(58, 58, 58); top: 646px;">U</span>
<div class="a" style="left:786px;top:672px;width:18px;height:2px;background:#3a3a3a"></div>
<svg style="left:828px;top:657px" width="13" height="9" viewBox="0 0 13 9"><path d="M1.5 1.5 L6.5 7 L11.5 1.5" fill="none" stroke="#262626" stroke-width="2"></path></svg>
<div class="a" style="left:855px;top:638px;width:2px;height:46px;background:#8d8d8d"></div>
<span class="t" style="left: 869px; --b: 670; font-size: 33px; color: rgb(58, 58, 58); top: 642.1px;">A</span>
<svg style="left:891px;top:646px" width="10" height="7" viewBox="0 0 10 7"><path d="M1.5 5.5 L5 1.5 L8.5 5.5" fill="none" stroke="#1e6fc4" stroke-width="2"></path></svg>
<span class="t" style="left: 924px; --b: 670; font-size: 27px; color: rgb(58, 58, 58); top: 647.1px;">A</span>
<svg style="left:942px;top:646px" width="10" height="7" viewBox="0 0 10 7"><path d="M1.5 1.5 L5 5.5 L8.5 1.5" fill="none" stroke="#1e6fc4" stroke-width="2"></path></svg>
<svg style="left:675px;top:696px" width="32" height="32" viewBox="0 0 32 32"><path d="M1 1 H31 M1 1 V29 M31 1 V29 M16 1 V29 M1 15 H31" stroke="#555" stroke-width="2" stroke-dasharray="2 2"></path><path d="M0 30 H32" stroke="#111" stroke-width="3"></path></svg>
<svg style="left:724px;top:707px" width="13" height="9" viewBox="0 0 13 9"><path d="M1.5 1.5 L6.5 7 L11.5 1.5" fill="none" stroke="#262626" stroke-width="2"></path></svg>
<div class="a" style="left:750px;top:690px;width:2px;height:46px;background:#8d8d8d"></div>
<svg style="left:763px;top:696px" width="34" height="34" viewBox="0 0 34 34"><path d="M4 12 L14 2 L23 11 L15 19 Q13 21 11 19 Z" fill="#e8e8e8" stroke="#404040" stroke-width="2" stroke-linejoin="round"></path><path d="M24 8 Q28 11 27 16" fill="none" stroke="#1e6fc4" stroke-width="2"></path><rect x="0" y="24" width="33" height="9" fill="#ffef00"></rect></svg>
<svg style="left:811px;top:707px" width="13" height="9" viewBox="0 0 13 9"><path d="M1.5 1.5 L6.5 7 L11.5 1.5" fill="none" stroke="#262626" stroke-width="2"></path></svg>
<span class="t" style="left: 848px; --b: 719; font-size: 30px; color: rgb(58, 58, 58); top: 693.6px;">A</span>
<div class="a" style="left:846px;top:721px;width:32px;height:9px;background:#ee1111"></div>
<svg style="left:894px;top:707px" width="13" height="9" viewBox="0 0 13 9"><path d="M1.5 1.5 L6.5 7 L11.5 1.5" fill="none" stroke="#262626" stroke-width="2"></path></svg>
<!-- alignment -->
<svg style="left:1001px;top:590px" width="30" height="24" viewBox="0 0 30 24"><path d="M1 3.8 H29 M5 11.9 H25 M1 19.9 H29" stroke="#3a3a3a" stroke-width="2"></path></svg>
<svg style="left:1053px;top:597px" width="30" height="22" viewBox="0 0 30 22"><path d="M1 2.9 H29 M5 10.9 H25 M1 18.9 H29" stroke="#3a3a3a" stroke-width="2"></path></svg>
<div class="a" style="left:1097px;top:586px;width:46px;height:46px;border-radius:7px;border:2px solid #8a8a8a;background:#cdcdcd"></div>
<svg style="left:1105px;top:604px" width="30" height="22" viewBox="0 0 30 22"><path d="M1 3.8 H29 M5 11.9 H25 M1 19.9 H29" stroke="#3a3a3a" stroke-width="2"></path></svg>
<svg style="left:1160px;top:594px" width="30" height="32" viewBox="0 0 30 32"><text x="1" y="14" font-size="17" font-family="Liberation Sans" fill="#3a3a3a">ab</text><text x="1" y="30" font-size="17" font-family="Liberation Sans" fill="#3a3a3a">c</text><path d="M25 13 Q28 24 17 25 M21 20 L16 25 L21 30" fill="none" stroke="#1e6fc4" stroke-width="2"></path></svg>
<svg style="left:1001px;top:646px" width="30" height="28" viewBox="0 0 30 28"><path d="M1 2 H29 M1 10 H20 M1 18 H29 M1 26 H20" stroke="#3a3a3a" stroke-width="2"></path></svg>
<div class="a" style="left:1045px;top:637px;width:46px;height:47px;border-radius:7px;border:2px solid #8a8a8a;background:#cdcdcd"></div>
<svg style="left:1053px;top:646px" width="30" height="28" viewBox="0 0 30 28"><path d="M1 2 H29 M5 10 H25 M1 18 H29 M5 26 H25" stroke="#3a3a3a" stroke-width="2"></path></svg>
<svg style="left:1105px;top:646px" width="30" height="28" viewBox="0 0 30 28"><path d="M1 2 H29 M10 10 H29 M1 18 H29 M10 26 H29" stroke="#3a3a3a" stroke-width="2"></path></svg>
<svg style="left:1156px;top:645px" width="31" height="31" viewBox="0 0 31 31"><rect x="1" y="1" width="28" height="28" fill="#e6e6e6" stroke="#404040" stroke-width="2"></rect><path d="M15 1 V29" stroke="#202020" stroke-width="2"></path><rect x="1" y="7" width="28" height="17" fill="#e6e6e6" stroke="#1e5fb0" stroke-width="2"></rect><path d="M5 15.5 H25 M9.5 11 L5 15.5 L9.5 20 M20.5 11 L25 15.5 L20.5 20" fill="none" stroke="#1e5fb0" stroke-width="2.2"></path></svg>
<svg style="left:1202px;top:657px" width="13" height="9" viewBox="0 0 13 9"><path d="M1.5 1.5 L6.5 7 L11.5 1.5" fill="none" stroke="#262626" stroke-width="2"></path></svg>
<svg style="left:1001px;top:697px" width="30" height="28" viewBox="0 0 30 28"><path d="M1 2 H29 M13 10 H29 M13 18 H29 M1 26 H29" stroke="#3a3a3a" stroke-width="2"></path><path d="M10 14 H1 M5 10 L1 14 L5 18" fill="none" stroke="#1e6fc4" stroke-width="2"></path></svg>
<svg style="left:1053px;top:697px" width="30" height="28" viewBox="0 0 30 28"><path d="M1 2 H29 M13 10 H29 M13 18 H29 M1 26 H29" stroke="#3a3a3a" stroke-width="2"></path><path d="M1 14 H10 M6 10 L10 14 L6 18" fill="none" stroke="#1e6fc4" stroke-width="2"></path></svg>
<div class="a" style="left:1095px;top:690px;width:2px;height:46px;background:#8d8d8d"></div>
<svg style="left:1109px;top:696px" width="34" height="33" viewBox="0 0 34 33"><text x="0" y="24" font-size="18" font-family="Liberation Sans" fill="#3a3a3a" transform="rotate(-45 10 16)">ab</text><path d="M12 31 L32 3 M24 4 H32 V12" fill="none" stroke="#1e6fc4" stroke-width="2"></path></svg>
<svg style="left:1156px;top:707px" width="13" height="9" viewBox="0 0 13 9"><path d="M1.5 1.5 L6.5 7 L11.5 1.5" fill="none" stroke="#262626" stroke-width="2"></path></svg>
<!-- number -->
<div class="a" style="left:1261px;top:586px;width:180px;height:46px;border-radius:7px;border:2px solid #7b7b7b;background:#c6c6c6"></div>
<span class="t" style="left: 1265px; --b: 617; font-size: 24px; color: rgb(27, 27, 27); --w: 87; transform: scaleX(0.8932); top: 596.7px;">Standard</span>
<svg style="left:1422px;top:604px" width="13" height="9" viewBox="0 0 13 9"><path d="M1.5 1.5 L6.5 7 L11.5 1.5" fill="none" stroke="#262626" stroke-width="2"></path></svg>
<svg style="left:1267px;top:650px" width="35" height="28" viewBox="0 0 35 28"><rect x="1" y="1" width="30" height="17" fill="#e6e6e6" stroke="#404040" stroke-width="2"></rect><text x="4" y="15" font-size="13" font-family="Liberation Sans" fill="#404040">CC</text><ellipse cx="26" cy="17" rx="7" ry="3" fill="#f2c46c" stroke="#6b4c10" stroke-width="1.6"></ellipse><path d="M19 17 V24 Q26 29 33 24 V17" fill="#f2c46c" stroke="#6b4c10" stroke-width="1.6"></path><path d="M19 21 Q26 25 33 21" fill="none" stroke="#6b4c10" stroke-width="1.6"></path></svg>
<svg style="left:1316px;top:657px" width="13" height="9" viewBox="0 0 13 9"><path d="M1.5 1.5 L6.5 7 L11.5 1.5" fill="none" stroke="#262626" stroke-width="2"></path></svg>
<span class="t" style="left: 1350px; --b: 674; font-size: 36px; color: rgb(58, 58, 58); top: 643.5px;">%</span>
<span class="t" style="left: 1402px; --b: 668; font-size: 21px; color: rgb(85, 85, 85); --w: 31; transform: scaleX(0.8845); top: 650.2px;">000</span>
<svg style="left:1267px;top:696px" width="33" height="33" viewBox="0 0 33 33"><path d="M14 9 H2 M6 5 L2 9 L6 13" fill="none" stroke="#1e6fc4" stroke-width="2"></path><text x="17" y="15" font-size="15" font-family="Liberation Sans" fill="#3a3a3a">,0</text><text x="8" y="31" font-size="15" font-family="Liberation Sans" fill="#3a3a3a">,00</text></svg>
<svg style="left:1319px;top:696px" width="33" height="33" viewBox="0 0 33 33"><text x="8" y="15" font-size="15" font-family="Liberation Sans" fill="#3a3a3a">,00</text><path d="M2 24 H14 M10 20 L14 24 L10 28" fill="none" stroke="#1e6fc4" stroke-width="2"></path><text x="17" y="31" font-size="15" font-family="Liberation Sans" fill="#3a3a3a">,0</text></svg>
<!-- styles -->
<svg style="left:1482px;top:595px" width="32" height="28" viewBox="0 0 32 28"><rect x="1" y="1" width="30" height="26" fill="#e6e6e6" stroke="#404040" stroke-width="1.8"></rect><rect x="7" y="1" width="11" height="8" fill="#e46c6c"></rect><rect x="7" y="18" width="15" height="9" fill="#e46c6c"></rect><rect x="7" y="9" width="5" height="9" fill="#6aa8e0"></rect><path d="M1 9 H31 M1 18 H31 M7 1 V27 M22 1 V27" stroke="#404040" stroke-width="1.6"></path></svg>
<span class="t" style="left: 1523px; --b: 619; font-size: 24px; color: rgb(38, 38, 38); --w: 245; transform: scaleX(1.0035); top: 598.7px;">Bedingte Formatierung</span>
<svg style="left:1777px;top:605px" width="13" height="9" viewBox="0 0 13 9"><path d="M1.5 1.5 L6.5 7 L11.5 1.5" fill="none" stroke="#262626" stroke-width="2"></path></svg>
<svg style="left:1482px;top:647px" width="32" height="29" viewBox="0 0 32 29"><rect x="1" y="1" width="30" height="27" fill="#e6e6e6" stroke="#404040" stroke-width="1.8"></rect><rect x="9" y="9" width="22" height="19" fill="#6aa8e0"></rect><path d="M1 9 H31 M1 18 H31 M9 1 V28 M20 1 V28" stroke="#404040" stroke-width="1.6"></path><path d="M8 27 Q12 20 18 20 L29 9 Q31 8 31 11 L21 22 Q19 28 8 27Z" fill="#d0d0d0" stroke="#404040" stroke-width="1.6"></path></svg>
<span class="t" style="left: 1523px; --b: 671; font-size: 24px; color: rgb(38, 38, 38); --w: 242; transform: scaleX(0.9931); top: 650.7px;">Als Tabelle formatieren</span>
<svg style="left:1774px;top:657px" width="13" height="9" viewBox="0 0 13 9"><path d="M1.5 1.5 L6.5 7 L11.5 1.5" fill="none" stroke="#262626" stroke-width="2"></path></svg>
<svg style="left:1482px;top:699px" width="32" height="29" viewBox="0 0 32 29"><rect x="1" y="1" width="30" height="27" fill="#e6e6e6" stroke="#404040" stroke-width="1.8"></rect><rect x="4" y="6" width="24" height="18" fill="#6aa8e0"></rect><path d="M1 6 H31 M1 24 H31 M4 1 V28 M28 1 V28" stroke="#404040" stroke-width="1.4"></path><path d="M8 27 Q12 20 18 20 L29 9 Q31 8 31 11 L21 22 Q19 28 8 27Z" fill="#d0d0d0" stroke="#404040" stroke-width="1.6"></path></svg>
<span class="t" style="left: 1523px; --b: 723; font-size: 24px; color: rgb(38, 38, 38); --w: 228; transform: scaleX(1.0113); top: 702.7px;">Zellenformatvorlagen</span>
<svg style="left:1760px;top:709px" width="13" height="9" viewBox="0 0 13 9"><path d="M1.5 1.5 L6.5 7 L11.5 1.5" fill="none" stroke="#262626" stroke-width="2"></path></svg>
<!-- cells -->
<svg style="left:1851px;top:586px" width="57" height="56" viewBox="0 0 57 56"><path d="M16 2 H41 M16 -1 V5 M41 -1 V5" stroke="#1e6fc4" stroke-width="2"></path><rect x="1" y="11" width="55" height="43" fill="#e6e6e6" stroke="#404040" stroke-width="2"></rect><rect x="16" y="25" width="26" height="15" fill="#6aa8e0" stroke="#1e5fb0" stroke-width="2"></rect><path d="M1 25 H56 M1 40 H56 M16 11 V54 M42 11 V54" stroke="#404040" stroke-width="2"></path></svg>
<span class="t" style="left: 1845px; --b: 680; font-size: 25px; color: rgb(38, 38, 38); --w: 66; transform: scaleX(0.9693); top: 658.8px;">Zellen</span>
<svg style="left:1872px;top:700px" width="13" height="9" viewBox="0 0 13 9"><path d="M1.5 1.5 L6.5 7 L11.5 1.5" fill="none" stroke="#262626" stroke-width="2"></path></svg>
<!-- edit -->
<svg style="left:1978px;top:591px" width="60" height="59" viewBox="0 0 60 59"><circle cx="38" cy="21" r="19.5" fill="#e2e2e2" stroke="#404040" stroke-width="2.2"></circle><path d="M25 35 L2 57" stroke="#404040" stroke-width="2.5"></path></svg>
<span class="t" style="left: 1952px; --b: 680; font-size: 25px; color: rgb(38, 38, 38); --w: 113; transform: scaleX(0.9344); top: 658.8px;">Bearbeiten</span>
<svg style="left:2001px;top:700px" width="13" height="9" viewBox="0 0 13 9"><path d="M1.5 1.5 L6.5 7 L11.5 1.5" fill="none" stroke="#262626" stroke-width="2"></path></svg>
<!-- add-ins -->
<svg style="left:2115px;top:595px" width="56" height="56" viewBox="0 0 56 56"><rect x="1.5" y="1.5" width="53" height="53" fill="none" stroke="#d83b01" stroke-width="3"></rect><rect x="8" y="8" width="17" height="17" fill="none" stroke="#d83b01" stroke-width="2.5"></rect><rect x="31" y="8" width="17" height="17" fill="none" stroke="#d83b01" stroke-width="2.5"></rect><rect x="8" y="31" width="17" height="17" fill="none" stroke="#d83b01" stroke-width="2.5"></rect><rect x="31" y="31" width="17" height="17" fill="none" stroke="#d83b01" stroke-width="2.5"></rect></svg>
<span class="t" style="left: 2116px; --b: 684; font-size: 25px; color: rgb(38, 38, 38); --w: 52; transform: scaleX(0.9846); top: 662.8px;">Add-</span>
<span class="t" style="left: 2128px; --b: 715; font-size: 25px; color: rgb(38, 38, 38); --w: 30; transform: scaleX(0.8993); top: 693.8px;">Ins</span>
<!-- data analysis -->
<svg style="left:2265px;top:595px" width="57" height="57" viewBox="0 0 57 57"><rect x="1" y="1" width="55" height="55" fill="#e6e6e6" stroke="#404040" stroke-width="2"></rect><rect x="1" y="1" width="55" height="7" fill="#8d8d8d"></rect><path d="M1 22 H56 M1 39 H56 M19 8 V56 M38 8 V56" stroke="#404040" stroke-width="1.6"></path><circle cx="26" cy="24" r="16" fill="#e6e6e6" stroke="#404040" stroke-width="2.5"></circle><path d="M37 35 L55 54" stroke="#404040" stroke-width="3"></path><rect x="18" y="24" width="5" height="9" fill="#404040"></rect><rect x="24" y="17" width="5" height="16" fill="#6aa8e0" stroke="#404040" stroke-width="1.2"></rect><rect x="30" y="20" width="5" height="13" fill="#6aa8e0" stroke="#404040" stroke-width="1.2"></rect></svg>
<span class="t" style="left: 2222px; --b: 684; font-size: 25px; color: rgb(38, 38, 38); --w: 141; transform: scaleX(0.9222); top: 662.8px;">Datenanalyse</span>
<svg style="left:2484px;top:743px" width="19" height="12" viewBox="0 0 19 12"><path d="M1.5 1.5 L9.5 10 L17.5 1.5" fill="none" stroke="#262626" stroke-width="2.2"></path></svg>
<div class="a" style="left:424px;top:793px;width:201px;height:44px;border-radius:7px;border:1.5px solid #6f6f6f;background:#474747"></div>
<span class="t" style="left: 432px; --b: 825; font-size: 26px; color: rgb(255, 255, 255); --w: 30; transform: scaleX(0.943); top: 803px;">E1</span>
<svg style="left:595px;top:811px" width="21" height="13" viewBox="0 0 21 13"><path d="M1.5 1.5 L10.5 11 L19.5 1.5" fill="none" stroke="#e8e8e8" stroke-width="2"></path></svg>
<div class="a" style="left:644px;top:803px;width:5px;height:5px;border-radius:50%;background:#e0e0e0"></div>
<div class="a" style="left:644px;top:812px;width:5px;height:5px;border-radius:50%;background:#e0e0e0"></div>
<div class="a" style="left:644px;top:821px;width:5px;height:5px;border-radius:50%;background:#e0e0e0"></div>
<div class="a" style="left:666px;top:793px;width:146px;height:44px;border-radius:7px;border:1.5px solid #6f6f6f;background:#474747"></div>
<svg style="left:679px;top:803px" width="25" height="24" viewBox="0 0 25 24"><path d="M1.5 1.5 L23.5 22.5 M23.5 1.5 L1.5 22.5" stroke="#8e8e8e" stroke-width="1.8"></path></svg>
<svg style="left:723px;top:803px" width="33" height="24" viewBox="0 0 33 24"><path d="M1.5 13 L11 22.5 L31.5 1.5" fill="none" stroke="#8e8e8e" stroke-width="1.8"></path></svg>
<span class="t" style="left: 770px; --b: 826; font-size: 30px; color: rgb(207, 207, 207); font-family: &quot;Liberation Serif&quot;, serif; font-style: italic; top: 800.6px;">fx</span>
<div class="a" style="left:820px;top:793px;width:1701px;height:82px;border-radius:7px;border:1.5px solid #6f6f6f;background:#4a4a4a"></div>
<span class="t" style="left: 842px; --b: 825; font-size: 26px; color: rgb(255, 255, 255); --w: 261; transform: scaleX(1.0262); top: 803px;">Normal approximation</span>
<svg style="left:2494px;top:806px" width="20" height="12" viewBox="0 0 20 12"><path d="M1.5 10.5 L10 2 L18.5 10.5" fill="none" stroke="#e8e8e8" stroke-width="2"></path></svg>
<div class="a" style="left:408px;top:889px;width:2128px;height:606px;background:#515151"></div>
<div class="a" style="left:461px;top:926px;width:2038px;height:568px;background:#fff"></div>
<div class="a" style="left:461px;top:889px;width:289px;height:37px;background:#666"></div>
<span class="t" style="--c: 605.2; left: 597.5px; --b: 918; font-size: 23px; color: rgb(242, 242, 242); top: 898.5px;">E</span>
<span class="t" style="--c: 871.3; left: 864.3px; --b: 918; font-size: 23px; color: rgb(242, 242, 242); top: 898.5px;">F</span>
<span class="t" style="--c: 1102.2; left: 1093.3px; --b: 918; font-size: 23px; color: rgb(242, 242, 242); top: 898.5px;">G</span>
<span class="t" style="--c: 1361.5; left: 1353.2px; --b: 918; font-size: 23px; color: rgb(242, 242, 242); top: 898.5px;">H</span>
<span class="t" style="--c: 1607.5; left: 1604.3px; --b: 918; font-size: 23px; color: rgb(242, 242, 242); top: 898.5px;">I</span>
<span class="t" style="--c: 1818.8; left: 1813px; --b: 918; font-size: 23px; color: rgb(242, 242, 242); top: 898.5px;">J</span>
<span class="t" style="--c: 2049.8; left: 2042.1px; --b: 918; font-size: 23px; color: rgb(242, 242, 242); top: 898.5px;">K</span>
<span class="t" style="--c: 2253.0; left: 2246.6px; --b: 918; font-size: 23px; color: rgb(242, 242, 242); top: 898.5px;">L</span>
<span class="t" style="--c: 2445.0; left: 2435.4px; --b: 918; font-size: 23px; color: rgb(242, 242, 242); top: 898.5px;">M</span>
<div class="a" style="left:460.5px;top:889px;width:1.5px;height:37px;background:#8a8a8a"></div>
<div class="a" style="left:748.9px;top:889px;width:1.5px;height:37px;background:#8a8a8a"></div>
<div class="a" style="left:992.8px;top:889px;width:1.5px;height:37px;background:#8a8a8a"></div>
<div class="a" style="left:1210.5px;top:889px;width:1.5px;height:37px;background:#8a8a8a"></div>
<div class="a" style="left:1511.5px;top:889px;width:1.5px;height:37px;background:#8a8a8a"></div>
<div class="a" style="left:1702.5px;top:889px;width:1.5px;height:37px;background:#8a8a8a"></div>
<div class="a" style="left:1934.0px;top:889px;width:1.5px;height:37px;background:#8a8a8a"></div>
<div class="a" style="left:2164.5px;top:889px;width:1.5px;height:37px;background:#8a8a8a"></div>
<div class="a" style="left:2340.5px;top:889px;width:1.5px;height:37px;background:#8a8a8a"></div>
<svg style="left:429px;top:893px" width="30" height="31" viewBox="0 0 30 31"><path d="M29 1 V30 H1 Z" fill="#efefef"></path></svg>
<div class="a" style="left:408px;top:926px;width:53px;height:38px;background:#666"></div>
<div class="a" style="left:408px;top:926.0px;width:53px;height:1.2px;background:#ababab"></div>
<span class="t" style="--c: 434.5; left: 427.3px; --b: 956.0; font-size: 26px; color: rgb(255, 255, 255); top: 934px;">1</span>
<div class="a" style="left:408px;top:964.0px;width:53px;height:1.2px;background:#ababab"></div>
<span class="t" style="--c: 434.5; left: 427.3px; --b: 994.0; font-size: 26px; color: rgb(255, 255, 255); top: 972px;">2</span>
<div class="a" style="left:408px;top:1002.0px;width:53px;height:1.2px;background:#ababab"></div>
<span class="t" style="--c: 434.5; left: 427.3px; --b: 1032.0; font-size: 26px; color: rgb(255, 255, 255); top: 1010px;">3</span>
<div class="a" style="left:408px;top:1040.0px;width:53px;height:1.2px;background:#ababab"></div>
<span class="t" style="--c: 434.5; left: 427.3px; --b: 1070.0; font-size: 26px; color: rgb(255, 255, 255); top: 1048px;">4</span>
<div class="a" style="left:408px;top:1078.0px;width:53px;height:1.2px;background:#ababab"></div>
<span class="t" style="--c: 434.5; left: 427.3px; --b: 1108.0; font-size: 26px; color: rgb(255, 255, 255); top: 1086px;">5</span>
<div class="a" style="left:408px;top:1116.0px;width:53px;height:1.2px;background:#ababab"></div>
<span class="t" style="--c: 434.5; left: 427.3px; --b: 1146.0; font-size: 26px; color: rgb(255, 255, 255); top: 1124px;">6</span>
<div class="a" style="left:408px;top:1154.0px;width:53px;height:1.2px;background:#ababab"></div>
<span class="t" style="--c: 434.5; left: 427.3px; --b: 1184.0; font-size: 26px; color: rgb(255, 255, 255); top: 1162px;">7</span>
<div class="a" style="left:408px;top:1192.0px;width:53px;height:1.2px;background:#ababab"></div>
<span class="t" style="--c: 434.5; left: 427.3px; --b: 1222.0; font-size: 26px; color: rgb(255, 255, 255); top: 1200px;">8</span>
<div class="a" style="left:408px;top:1230.0px;width:53px;height:1.2px;background:#ababab"></div>
<span class="t" style="--c: 434.5; left: 427.3px; --b: 1260.0; font-size: 26px; color: rgb(255, 255, 255); top: 1238px;">9</span>
<div class="a" style="left:408px;top:1268.0px;width:53px;height:1.2px;background:#ababab"></div>
<span class="t" style="--c: 434.5; left: 420px; --b: 1298.0; font-size: 26px; color: rgb(255, 255, 255); top: 1276px;">10</span>
<div class="a" style="left:408px;top:1306.0px;width:53px;height:1.2px;background:#ababab"></div>
<span class="t" style="--c: 434.5; left: 421px; --b: 1336.0; font-size: 26px; color: rgb(255, 255, 255); top: 1314px;">11</span>
<div class="a" style="left:408px;top:1344.0px;width:53px;height:1.2px;background:#ababab"></div>
<span class="t" style="--c: 434.5; left: 420px; --b: 1374.0; font-size: 26px; color: rgb(255, 255, 255); top: 1352px;">12</span>
<div class="a" style="left:408px;top:1382.0px;width:53px;height:1.2px;background:#ababab"></div>
<span class="t" style="--c: 434.5; left: 420px; --b: 1412.0; font-size: 26px; color: rgb(255, 255, 255); top: 1390px;">13</span>
<div class="a" style="left:408px;top:1420.0px;width:53px;height:1.2px;background:#ababab"></div>
<span class="t" style="--c: 434.5; left: 420px; --b: 1450.0; font-size: 26px; color: rgb(255, 255, 255); top: 1428px;">14</span>
<div class="a" style="left:408px;top:1458.0px;width:53px;height:1.2px;background:#ababab"></div>
<span class="t" style="--c: 434.5; left: 420px; --b: 1488.0; font-size: 26px; color: rgb(255, 255, 255); top: 1466px;">15</span>
<div class="a" style="left:459.5px;top:889px;width:1.5px;height:605px;background:#8a8a8a"></div>
<div class="a" style="left:461px;top:964.0px;width:2038px;height:1px;background:#dcdcdc"></div>
<div class="a" style="left:461px;top:1002.0px;width:2038px;height:1px;background:#dcdcdc"></div>
<div class="a" style="left:461px;top:1040.0px;width:2038px;height:1px;background:#dcdcdc"></div>
<div class="a" style="left:461px;top:1078.0px;width:2038px;height:1px;background:#dcdcdc"></div>
<div class="a" style="left:461px;top:1116.0px;width:2038px;height:1px;background:#dcdcdc"></div>
<div class="a" style="left:461px;top:1154.0px;width:2038px;height:1px;background:#dcdcdc"></div>
<div class="a" style="left:461px;top:1192.0px;width:2038px;height:1px;background:#dcdcdc"></div>
<div class="a" style="left:461px;top:1230.0px;width:2038px;height:1px;background:#dcdcdc"></div>
<div class="a" style="left:461px;top:1268.0px;width:2038px;height:1px;background:#dcdcdc"></div>
<div class="a" style="left:461px;top:1306.0px;width:2038px;height:1px;background:#dcdcdc"></div>
<div class="a" style="left:461px;top:1344.0px;width:2038px;height:1px;background:#dcdcdc"></div>
<div class="a" style="left:461px;top:1382.0px;width:2038px;height:1px;background:#dcdcdc"></div>
<div class="a" style="left:461px;top:1420.0px;width:2038px;height:1px;background:#dcdcdc"></div>
<div class="a" style="left:461px;top:1458.0px;width:2038px;height:1px;background:#dcdcdc"></div>
<div class="a" style="left:748.9px;top:926px;width:1px;height:568px;background:#dcdcdc"></div>
<div class="a" style="left:992.8px;top:926px;width:1px;height:568px;background:#dcdcdc"></div>
<div class="a" style="left:1210.5px;top:926px;width:1px;height:568px;background:#dcdcdc"></div>
<div class="a" style="left:1511.5px;top:926px;width:1px;height:568px;background:#dcdcdc"></div>
<div class="a" style="left:1702.5px;top:926px;width:1px;height:568px;background:#dcdcdc"></div>
<div class="a" style="left:1934.0px;top:926px;width:1px;height:568px;background:#dcdcdc"></div>
<div class="a" style="left:2164.5px;top:926px;width:1px;height:568px;background:#dcdcdc"></div>
<div class="a" style="left:2340.5px;top:926px;width:1px;height:568px;background:#dcdcdc"></div>
<div class="a" style="left:459px;top:924px;width:292px;height:43px;border:3px solid #1d6f42"></div>
<div class="a" style="left:746px;top:962px;width:9px;height:9px;background:#1d6f42;border:1.5px solid #fff"></div>
<span class="t b" style="left: 469px; --b: 956; font-size: 25px; color: rgb(0, 0, 0); --w: 273; transform: scaleX(1.0289); top: 934.8px;">Normal approximation</span>
<span class="t b" style="left: 756px; --b: 956; font-size: 25px; color: rgb(0, 0, 0); --w: 231; transform: scaleX(1.0265); top: 934.8px;">Standard deviation</span>
<span class="t b" style="left: 998px; --b: 956; font-size: 25px; color: rgb(0, 0, 0); --w: 207; transform: scaleX(1.0494); top: 934.8px;">Treatment group</span>
<span class="t b" style="left: 1218px; --b: 956; font-size: 25px; color: rgb(0, 0, 0); --w: 288; transform: scaleX(1.0213); top: 934.8px;">Planned allocation ratio</span>
<span class="t b" style="left: 1519px; --b: 956; font-size: 25px; color: rgb(0, 0, 0); --w: 178; transform: scaleX(1.0008); top: 934.8px;">Max # subjects</span>
<span class="t b" style="left: 1710px; --b: 956; font-size: 25px; color: rgb(0, 0, 0); --w: 218.5; transform: scaleX(1.0146); top: 934.8px;">Max # subjects (1)</span>
<span class="t b" style="left: 1940px; --b: 956; font-size: 25px; color: rgb(0, 0, 0); --w: 218.5; transform: scaleX(1.0146); top: 934.8px;">Max # subjects (2)</span>
<span class="t b" style="left: 2193.5px; --b: 956; font-size: 25px; color: rgb(0, 0, 0); --w: 119.5; transform: scaleX(0.9773); top: 934.8px;"># subjects</span>
<div class="a" style="left:2341px;top:926px;width:158px;height:190px;overflow:hidden">
<span class="t b" style="left: 6.6px; --b: 29; font-size: 25px; color: rgb(0, 0, 0); --w: 196; transform: scaleX(1.0148); top: 7.8px;">Reject per stage</span>
<span class="t" style="left: 60px; --b: 69; font-size: 26.6px; color: rgb(0, 0, 0); top: 46.5px;">0,20960</span>
<span class="t" style="left: 60px; --b: 107; font-size: 26.6px; color: rgb(0, 0, 0); top: 84.5px;">0,20960</span>
<span class="t" style="left: 60px; --b: 145; font-size: 26.6px; color: rgb(0, 0, 0); top: 122.5px;">0,59039</span>
<span class="t" style="left: 60px; --b: 183; font-size: 26.6px; color: rgb(0, 0, 0); top: 160.5px;">0,59039</span>
</div>
<span class="t" style="--c: 606; left: 563px; --b: 995.0; font-size: 25.5px; color: rgb(0, 0, 0); --w: 86; transform: scaleX(0.8669); top: 973.4px;">FALSCH</span>
<span class="t" style="--r: 987; left: 972.2px; --b: 995.0; font-size: 26.6px; color: rgb(0, 0, 0); top: 972.5px;">1</span>
<span class="t" style="--r: 1205; left: 1190.2px; --b: 995.0; font-size: 26.6px; color: rgb(0, 0, 0); top: 972.5px;">2</span>
<span class="t" style="--r: 1506; left: 1491.2px; --b: 995.0; font-size: 26.6px; color: rgb(0, 0, 0); top: 972.5px;">1</span>
<span class="t" style="--r: 1697; left: 1541.5px; --b: 995.0; font-size: 26.6px; color: rgb(0, 0, 0); --w: 155.5; transform: scaleX(1.0013); top: 972.5px;">792,9396416</span>
<span class="t" style="--r: 1928.5; left: 1773px; --b: 995.0; font-size: 26.6px; color: rgb(0, 0, 0); --w: 155.5; transform: scaleX(1.0013); top: 972.5px;">396,4698208</span>
<span class="t" style="--r: 2159; left: 2003.5px; --b: 995.0; font-size: 26.6px; color: rgb(0, 0, 0); --w: 155.5; transform: scaleX(1.0013); top: 972.5px;">396,4698208</span>
<span class="t" style="--r: 2335.5; left: 2180px; --b: 995.0; font-size: 26.6px; color: rgb(0, 0, 0); --w: 155.5; transform: scaleX(1.0013); top: 972.5px;">396,4698208</span>
<span class="t" style="--c: 606; left: 563px; --b: 1033.1; font-size: 25.5px; color: rgb(0, 0, 0); --w: 86; transform: scaleX(0.8669); top: 1011.5px;">FALSCH</span>
<span class="t" style="--r: 987; left: 972.2px; --b: 1033.1; font-size: 26.6px; color: rgb(0, 0, 0); top: 1010.6px;">1</span>
<span class="t" style="--r: 1205; left: 1190.2px; --b: 1033.1; font-size: 26.6px; color: rgb(0, 0, 0); top: 1010.6px;">2</span>
<span class="t" style="--r: 1506; left: 1491.2px; --b: 1033.1; font-size: 26.6px; color: rgb(0, 0, 0); top: 1010.6px;">1</span>
<span class="t" style="--r: 1697; left: 1541.5px; --b: 1033.1; font-size: 26.6px; color: rgb(0, 0, 0); --w: 155.5; transform: scaleX(1.0013); top: 1010.6px;">33,68981073</span>
<span class="t" style="--r: 1928.5; left: 1773px; --b: 1033.1; font-size: 26.6px; color: rgb(0, 0, 0); --w: 155.5; transform: scaleX(1.0013); top: 1010.6px;">16,84490536</span>
<span class="t" style="--r: 2159; left: 2003.5px; --b: 1033.1; font-size: 26.6px; color: rgb(0, 0, 0); --w: 155.5; transform: scaleX(1.0013); top: 1010.6px;">16,84490536</span>
<span class="t" style="--r: 2335.5; left: 2180px; --b: 1033.1; font-size: 26.6px; color: rgb(0, 0, 0); --w: 155.5; transform: scaleX(1.0013); top: 1010.6px;">16,84490536</span>
<span class="t" style="--c: 606; left: 563px; --b: 1071.2; font-size: 25.5px; color: rgb(0, 0, 0); --w: 86; transform: scaleX(0.8669); top: 1049.6px;">FALSCH</span>
<span class="t" style="--r: 987; left: 972.2px; --b: 1071.2; font-size: 26.6px; color: rgb(0, 0, 0); top: 1048.7px;">1</span>
<span class="t" style="--r: 1205; left: 1190.2px; --b: 1071.2; font-size: 26.6px; color: rgb(0, 0, 0); top: 1048.7px;">2</span>
<span class="t" style="--r: 1506; left: 1491.2px; --b: 1071.2; font-size: 26.6px; color: rgb(0, 0, 0); top: 1048.7px;">1</span>
<span class="t" style="--r: 1697; left: 1541.5px; --b: 1071.2; font-size: 26.6px; color: rgb(0, 0, 0); --w: 155.5; transform: scaleX(1.0013); top: 1048.7px;">792,9396416</span>
<span class="t" style="--r: 1928.5; left: 1773px; --b: 1071.2; font-size: 26.6px; color: rgb(0, 0, 0); --w: 155.5; transform: scaleX(1.0013); top: 1048.7px;">396,4698208</span>
<span class="t" style="--r: 2159; left: 2003.5px; --b: 1071.2; font-size: 26.6px; color: rgb(0, 0, 0); --w: 155.5; transform: scaleX(1.0013); top: 1048.7px;">396,4698208</span>
<span class="t" style="--r: 2335.5; left: 2180px; --b: 1071.2; font-size: 26.6px; color: rgb(0, 0, 0); --w: 155.5; transform: scaleX(1.0013); top: 1048.7px;">792,9396416</span>
<span class="t" style="--c: 606; left: 563px; --b: 1109.3; font-size: 25.5px; color: rgb(0, 0, 0); --w: 86; transform: scaleX(0.8669); top: 1087.7px;">FALSCH</span>
<span class="t" style="--r: 987; left: 972.2px; --b: 1109.3; font-size: 26.6px; color: rgb(0, 0, 0); top: 1086.8px;">1</span>
<span class="t" style="--r: 1205; left: 1190.2px; --b: 1109.3; font-size: 26.6px; color: rgb(0, 0, 0); top: 1086.8px;">2</span>
<span class="t" style="--r: 1506; left: 1491.2px; --b: 1109.3; font-size: 26.6px; color: rgb(0, 0, 0); top: 1086.8px;">1</span>
<span class="t" style="--r: 1697; left: 1541.5px; --b: 1109.3; font-size: 26.6px; color: rgb(0, 0, 0); --w: 155.5; transform: scaleX(1.0013); top: 1086.8px;">33,68981073</span>
<span class="t" style="--r: 1928.5; left: 1773px; --b: 1109.3; font-size: 26.6px; color: rgb(0, 0, 0); --w: 155.5; transform: scaleX(1.0013); top: 1086.8px;">16,84490536</span>
<span class="t" style="--r: 2159; left: 2003.5px; --b: 1109.3; font-size: 26.6px; color: rgb(0, 0, 0); --w: 155.5; transform: scaleX(1.0013); top: 1086.8px;">16,84490536</span>
<span class="t" style="--r: 2335.5; left: 2180px; --b: 1109.3; font-size: 26.6px; color: rgb(0, 0, 0); --w: 155.5; transform: scaleX(1.0013); top: 1086.8px;">33,68981073</span>
<!-- vertical scrollbar -->
<div class="a" style="left:2499px;top:889px;width:37px;height:606px;background:#4a4a4a"></div>
<div class="a" style="left:2502px;top:890px;width:33px;height:608px;border-radius:17px;background:#3c3c3c"></div>
<svg style="left:2509px;top:901px" width="19" height="13" viewBox="0 0 19 13"><path d="M9.5 1 L18 12 H1 Z" fill="#cacaca" stroke="#cacaca" stroke-width="3" stroke-linejoin="round"></path></svg>
<div class="a" style="left:2511px;top:923px;width:16px;height:375px;border-radius:8px;background:#c9c9c9"></div>
<svg style="left:2509px;top:1473px" width="19" height="13" viewBox="0 0 19 13"><path d="M9.5 12 L18 1 H1 Z" fill="#cacaca" stroke="#cacaca" stroke-width="3" stroke-linejoin="round"></path></svg>
<!-- sheet tabs bar -->
<div class="a" style="left:408px;top:1494px;width:2128px;height:64px;background:linear-gradient(90deg,#4b4f59 0,#4b4d54 35%,#4b4b4e 70%,#4b4b4d 100%)"></div>
<div class="a" style="left:1081px;top:1494px;width:204px;height:12px;background:#fff"></div>
<div class="a" style="left:1071px;top:1494px;width:20px;height:40px;border-radius:0 10px 0 0;background:#4b4d53"></div>
<div class="a" style="left:1275px;top:1494px;width:20px;height:40px;border-radius:10px 0 0 0;background:#4b4d53"></div>
<div class="a" style="left:1091px;top:1490px;width:184px;height:60px;border-radius:0 0 11px 11px;background:#fff"></div>
<svg style="left:452px;top:1510px" width="17" height="29" viewBox="0 0 17 29"><path d="M14 2 L3 14.5 L14 27" fill="none" stroke="#9c9c9c" stroke-width="2"></path></svg>
<svg style="left:512px;top:1510px" width="17" height="29" viewBox="0 0 17 29"><path d="M3 2 L14 14.5 L3 27" fill="none" stroke="#dadada" stroke-width="2"></path></svg>
<span class="t" style="left: 642px; --b: 1537; font-size: 27px; color: rgb(242, 242, 242); --w: 84; transform: scaleX(0.9994); top: 1514.1px;">Design</span>
<div class="a" style="left:752px;top:1508px;width:2px;height:35px;background:#7c7c7c"></div>
<span class="t" style="left: 782px; --b: 1537; font-size: 27px; color: rgb(242, 242, 242); --w: 270; transform: scaleX(0.9997); top: 1514.1px;">Design Characteristics</span>
<div class="a" style="left:1081px;top:1508px;width:2px;height:35px;background:#7c7c7c"></div>
<span class="t" style="left: 1107px; --b: 1530; font-size: 27px; color: rgb(26, 26, 26); --w: 151; transform: scaleX(0.9962); top: 1507.1px;">Sample Size</span>
<div class="a" style="left:1107px;top:1540px;width:152px;height:4px;background:#107c41"></div>
<div class="a" style="left:1282px;top:1508px;width:2px;height:35px;background:#7c7c7c"></div>
<span class="t" style="left: 1313px; --b: 1537; font-size: 27px; color: rgb(242, 242, 242); --w: 214; transform: scaleX(1.0642); top: 1514.1px;">Meta information</span>
<div class="a" style="left:1554px;top:1521px;width:6px;height:6px;border-radius:50%;background:#e0e0e0"></div>
<div class="a" style="left:1562.5px;top:1521px;width:6px;height:6px;border-radius:50%;background:#e0e0e0"></div>
<div class="a" style="left:1571px;top:1521px;width:6px;height:6px;border-radius:50%;background:#e0e0e0"></div>
<div class="a" style="left:1618px;top:1524px;width:23px;height:2px;background:#e0e0e0"></div>
<div class="a" style="left:1629px;top:1513px;width:2px;height:23px;background:#e0e0e0"></div>
<div class="a" style="left:1692px;top:1510px;width:5px;height:5px;border-radius:50%;background:#e0e0e0"></div>
<div class="a" style="left:1692px;top:1520.5px;width:5px;height:5px;border-radius:50%;background:#e0e0e0"></div>
<div class="a" style="left:1692px;top:1531px;width:5px;height:5px;border-radius:50%;background:#e0e0e0"></div>
<div class="a" style="left:1728px;top:1508px;width:773px;height:33px;border-radius:17px;background:#3c3c3c"></div>
<svg style="left:1736px;top:1515px" width="15" height="19" viewBox="0 0 15 19"><path d="M1 9.5 L14 1 V18 Z" fill="#cacaca" stroke="#cacaca" stroke-width="3" stroke-linejoin="round"></path></svg>
<div class="a" style="left:1840px;top:1516px;width:308px;height:17px;border-radius:9px;background:#c9c9c9"></div>
<svg style="left:2477px;top:1515px" width="15" height="19" viewBox="0 0 15 19"><path d="M14 9.5 L1 1 V18 Z" fill="#cacaca" stroke="#cacaca" stroke-width="3" stroke-linejoin="round"></path></svg>
<!-- status bar -->
<div class="a" style="left:408px;top:1557px;width:2130px;height:45px;border-radius:0 0 11px 11px;background:#505050;border-top:2px solid #383838"></div>
<span class="t" style="left: 430px; --b: 1589; font-size: 23px; color: rgb(242, 242, 242); --w: 53; transform: scaleX(0.882); top: 1569.5px;">Bereit</span>
<svg style="left:519px;top:1570px" width="33" height="30" viewBox="0 0 33 30"><circle cx="13" cy="4.5" r="3.5" fill="none" stroke="#e8e8e8" stroke-width="1.8"></circle><path d="M2 9 Q13 13 24 9 M13 11 V18 L8 28 M13 18 L17 22" fill="none" stroke="#e8e8e8" stroke-width="1.8"></path><path d="M18 22 L23 27 L32 16" fill="none" stroke="#e8e8e8" stroke-width="1.8"></path></svg>
<span class="t" style="left: 557px; --b: 1589; font-size: 23px; color: rgb(242, 242, 242); --w: 291; transform: scaleX(0.8891); top: 1569.5px;">Barrierefreiheit: Keine Probleme</span>
<div class="a" style="left:1916px;top:1559px;width:80px;height:42px;background:#5b5b5b"></div>
<svg style="left:1941px;top:1567px" width="28" height="26" viewBox="0 0 28 26"><rect x="1" y="1" width="26" height="24" fill="none" stroke="#e8e8e8" stroke-width="2"></rect><path d="M1 9 H27 M1 17 H27 M9.5 1 V25 M18.5 1 V25" stroke="#e8e8e8" stroke-width="2"></path></svg>
<svg style="left:2022px;top:1567px" width="29" height="26" viewBox="0 0 29 26"><rect x="1" y="1" width="27" height="24" fill="none" stroke="#e8e8e8" stroke-width="2"></rect><rect x="6" y="5" width="17" height="16" fill="none" stroke="#e8e8e8" stroke-width="1.6"></rect><path d="M9 9 H20 M9 13 H20 M9 17 H20" stroke="#e8e8e8" stroke-width="1.6"></path></svg>
<svg style="left:2101px;top:1567px" width="30" height="26" viewBox="0 0 30 26"><rect x="1" y="1" width="28" height="24" fill="none" stroke="#e8e8e8" stroke-width="2"></rect><path d="M1 14 H22 M22 1 V14 M11 1 V14" stroke="#e8e8e8" stroke-width="2"></path></svg>
<div class="a" style="left:2168px;top:1579px;width:16px;height:2px;background:#cfcfcf"></div>
<div class="a" style="left:2195px;top:1579px;width:197px;height:2px;background:#bdbdbd"></div>
<div class="a" style="left:2288px;top:1570px;width:11px;height:21px;border-radius:2px;background:#bdbdbd"></div>
<div class="a" style="left:2404px;top:1579px;width:16px;height:2px;background:#cfcfcf"></div>
<div class="a" style="left:2411px;top:1572px;width:2px;height:16px;background:#cfcfcf"></div>
<span class="t" style="left: 2446px; --b: 1590; font-size: 23px; color: rgb(242, 242, 242); --w: 54; transform: scaleX(0.828); top: 1570.5px;">100 %</span>

<!--EXCEL_END-->

<!-- ARROW -->
<svg style="left:0;top:0" width="3323" height="1647"><path d="M1165 1492 L1233.4 1419.5 L1246.3 1431.7 L1351.5 1362.5 L1378.1 1388.8 L1262.8 1447.1 L1277.2 1462.2 Z" fill="#ff0000" stroke="#3a1010" stroke-width="1"></path></svg>

</body></html>
